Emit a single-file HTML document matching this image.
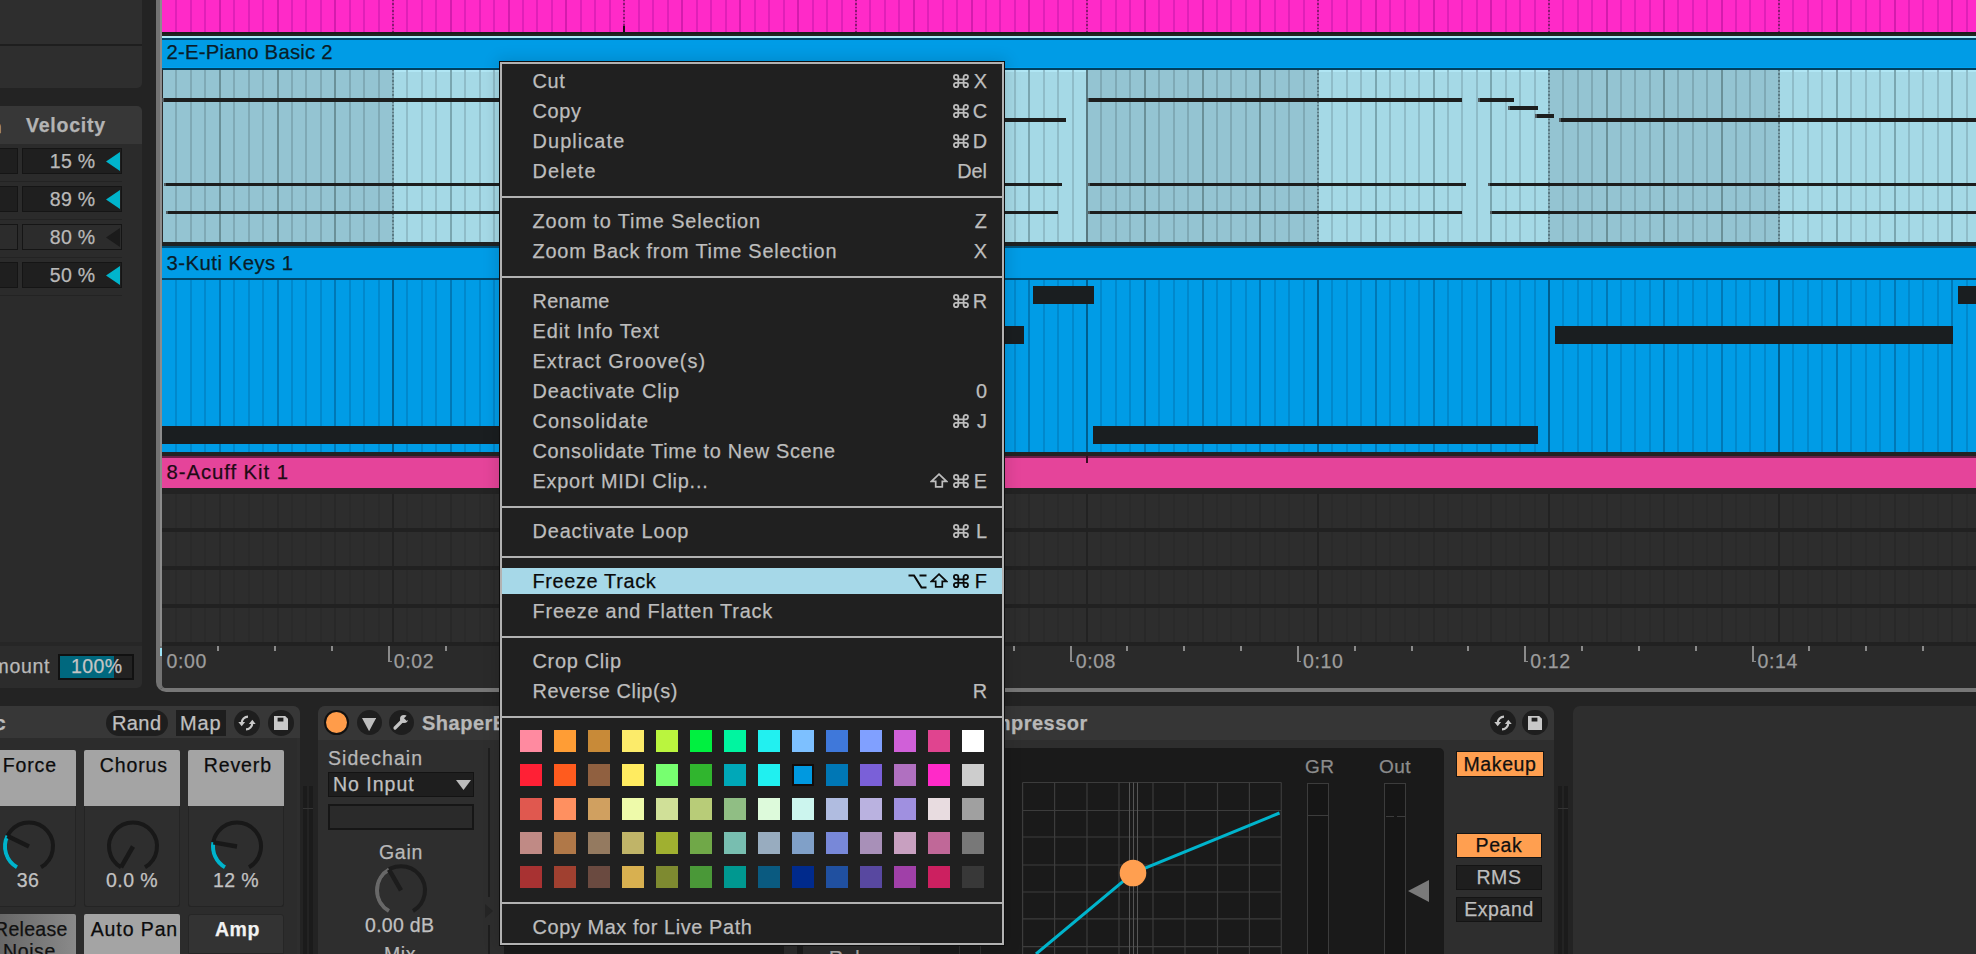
<!DOCTYPE html>
<html><head><meta charset="utf-8"><style>
html,body{margin:0;padding:0;width:1976px;height:954px;overflow:hidden;background:#232323;position:relative}
body>div,body>svg{position:absolute}
.t{white-space:pre;font-family:"Liberation Sans",sans-serif;-webkit-text-stroke:0.25px currentColor}
</style></head><body>
<div style="left:0px;top:0px;width:142px;height:88px;background:#2e2e2e;border-bottom-right-radius:5px"></div>
<div style="left:0px;top:44px;width:142px;height:1.5px;background:#1e1e1e;"></div>
<div style="left:0px;top:106px;width:142px;height:38px;background:#373737;border-top-right-radius:5px"></div>
<div style="left:0px;top:144px;width:142px;height:498px;background:#2b2b2b;"></div>
<div style="left:0px;top:642px;width:142px;height:4px;background:#262626;"></div>
<div style="left:0px;top:646px;width:142px;height:42px;background:#2c2c2c;border-bottom-right-radius:5px"></div>
<div class="t" style="left:-10px;top:116.72px;font-size:19px;line-height:19px;color:#b4b4b4;font-weight:bold;letter-spacing:0.4px;">n</div>
<div class="t" style="left:26px;top:116.29px;font-size:19.5px;line-height:19.5px;color:#b4b4b4;font-weight:bold;letter-spacing:0.78px;">Velocity</div>
<div style="left:-2px;top:148px;width:20px;height:26px;background:#1f1f1f;border:1px solid #151515;box-sizing:border-box"></div>
<div style="left:22px;top:148px;width:100px;height:26px;background:#1f1f1f;border:1.5px solid #151515;box-sizing:border-box"></div>
<div class="t" style="right:1880.5px;top:151.99px;font-size:19.5px;line-height:19.5px;color:#b9b9b9;font-weight:normal;letter-spacing:0.3px;text-align:right;">15 %</div>
<svg style="left:106px;top:151.5px" width="15" height="19"><polygon points="0,9.5 14,0 14,19" fill="#00b4cc"/></svg>
<div style="left:0px;top:180.5px;width:122px;height:1.5px;background:#232323;"></div>
<div style="left:-2px;top:186px;width:20px;height:26px;background:#1f1f1f;border:1px solid #151515;box-sizing:border-box"></div>
<div style="left:22px;top:186px;width:100px;height:26px;background:#1f1f1f;border:1.5px solid #151515;box-sizing:border-box"></div>
<div class="t" style="right:1880.5px;top:189.99px;font-size:19.5px;line-height:19.5px;color:#b9b9b9;font-weight:normal;letter-spacing:0.3px;text-align:right;">89 %</div>
<svg style="left:106px;top:189.5px" width="15" height="19"><polygon points="0,9.5 14,0 14,19" fill="#00b4cc"/></svg>
<div style="left:0px;top:218.5px;width:122px;height:1.5px;background:#232323;"></div>
<div style="left:-2px;top:224px;width:20px;height:26px;background:#2c2c2c;border:1px solid #151515;box-sizing:border-box"></div>
<div style="left:22px;top:224px;width:100px;height:26px;background:#2c2c2c;border:1.5px solid #151515;box-sizing:border-box"></div>
<div class="t" style="right:1880.5px;top:227.99px;font-size:19.5px;line-height:19.5px;color:#b9b9b9;font-weight:normal;letter-spacing:0.3px;text-align:right;">80 %</div>
<svg style="left:106px;top:227.5px" width="15" height="19"><polygon points="0,9.5 14,0 14,19" fill="#1b1b1b"/></svg>
<div style="left:0px;top:256.5px;width:122px;height:1.5px;background:#232323;"></div>
<div style="left:-2px;top:262px;width:20px;height:26px;background:#1f1f1f;border:1px solid #151515;box-sizing:border-box"></div>
<div style="left:22px;top:262px;width:100px;height:26px;background:#1f1f1f;border:1.5px solid #151515;box-sizing:border-box"></div>
<div class="t" style="right:1880.5px;top:265.99px;font-size:19.5px;line-height:19.5px;color:#b9b9b9;font-weight:normal;letter-spacing:0.3px;text-align:right;">50 %</div>
<svg style="left:106px;top:265.5px" width="15" height="19"><polygon points="0,9.5 14,0 14,19" fill="#00b4cc"/></svg>
<div style="left:0px;top:294.5px;width:122px;height:1.5px;background:#232323;"></div>
<div class="t" style="left:-7.5px;top:657.49px;font-size:19.5px;line-height:19.5px;color:#b9b9b9;font-weight:normal;letter-spacing:0.7px;">mount</div>
<div style="left:58px;top:654px;width:76px;height:26px;background:#222222;border:2px solid #111;box-sizing:border-box"></div>
<div style="left:60px;top:656px;width:54px;height:22px;background:#00687e;"></div>
<div class="t" style="left:71px;top:657.49px;font-size:19.5px;line-height:19.5px;color:#c4c4c4;font-weight:normal;letter-spacing:0.4px;">100%</div>
<div style="left:142px;top:0px;width:14px;height:706px;background:#232323;"></div>
<div style="left:156px;top:-20px;width:1840px;height:712px;border-left:6px solid #727272;border-bottom:4px solid #777;border-bottom-left-radius:10px;box-sizing:border-box;background:#2a2a2a"></div>
<div style="left:159.5px;top:0px;width:2.5px;height:646px;background:#8c8c8c;"></div>
<div style="left:162px;top:0px;width:1814px;height:32px;background:#ff2ac8;"></div>
<div style="left:175px;top:0px;width:2px;height:32px;background:#e020b8;"></div>
<div style="left:190px;top:0px;width:2px;height:32px;background:#e020b8;"></div>
<div style="left:204px;top:0px;width:2px;height:32px;background:#e020b8;"></div>
<div style="left:219px;top:0px;width:2px;height:32px;background:#d41cad;"></div>
<div style="left:233px;top:0px;width:2px;height:32px;background:#e020b8;"></div>
<div style="left:248px;top:0px;width:2px;height:32px;background:#e020b8;"></div>
<div style="left:262px;top:0px;width:2px;height:32px;background:#e020b8;"></div>
<div style="left:277px;top:0px;width:2px;height:32px;background:#d41cad;"></div>
<div style="left:291px;top:0px;width:2px;height:32px;background:#e020b8;"></div>
<div style="left:305px;top:0px;width:2px;height:32px;background:#e020b8;"></div>
<div style="left:320px;top:0px;width:2px;height:32px;background:#e020b8;"></div>
<div style="left:334px;top:0px;width:2px;height:32px;background:#d41cad;"></div>
<div style="left:349px;top:0px;width:2px;height:32px;background:#e020b8;"></div>
<div style="left:363px;top:0px;width:2px;height:32px;background:#e020b8;"></div>
<div style="left:378px;top:0px;width:2px;height:32px;background:#e020b8;"></div>
<div style="left:392px;top:0px;width:2px;height:32px;background:repeating-linear-gradient(180deg,#8a1870 0 1.5px,#e020b8 1.5px 3.5px)"></div>
<div style="left:406px;top:0px;width:2px;height:32px;background:#e020b8;"></div>
<div style="left:421px;top:0px;width:2px;height:32px;background:#e020b8;"></div>
<div style="left:435px;top:0px;width:2px;height:32px;background:#e020b8;"></div>
<div style="left:450px;top:0px;width:2px;height:32px;background:#d41cad;"></div>
<div style="left:464px;top:0px;width:2px;height:32px;background:#e020b8;"></div>
<div style="left:479px;top:0px;width:2px;height:32px;background:#e020b8;"></div>
<div style="left:493px;top:0px;width:2px;height:32px;background:#e020b8;"></div>
<div style="left:508px;top:0px;width:2px;height:32px;background:#d41cad;"></div>
<div style="left:522px;top:0px;width:2px;height:32px;background:#e020b8;"></div>
<div style="left:536px;top:0px;width:2px;height:32px;background:#e020b8;"></div>
<div style="left:551px;top:0px;width:2px;height:32px;background:#e020b8;"></div>
<div style="left:565px;top:0px;width:2px;height:32px;background:#d41cad;"></div>
<div style="left:580px;top:0px;width:2px;height:32px;background:#e020b8;"></div>
<div style="left:594px;top:0px;width:2px;height:32px;background:#e020b8;"></div>
<div style="left:609px;top:0px;width:2px;height:32px;background:#e020b8;"></div>
<div style="left:623px;top:0px;width:2px;height:32px;background:repeating-linear-gradient(180deg,#8a1870 0 1.5px,#e020b8 1.5px 3.5px)"></div>
<div style="left:638px;top:0px;width:2px;height:32px;background:#e020b8;"></div>
<div style="left:652px;top:0px;width:2px;height:32px;background:#e020b8;"></div>
<div style="left:667px;top:0px;width:2px;height:32px;background:#e020b8;"></div>
<div style="left:681px;top:0px;width:2px;height:32px;background:#d41cad;"></div>
<div style="left:696px;top:0px;width:2px;height:32px;background:#e020b8;"></div>
<div style="left:710px;top:0px;width:2px;height:32px;background:#e020b8;"></div>
<div style="left:725px;top:0px;width:2px;height:32px;background:#e020b8;"></div>
<div style="left:739px;top:0px;width:2px;height:32px;background:#d41cad;"></div>
<div style="left:754px;top:0px;width:2px;height:32px;background:#e020b8;"></div>
<div style="left:768px;top:0px;width:2px;height:32px;background:#e020b8;"></div>
<div style="left:783px;top:0px;width:2px;height:32px;background:#e020b8;"></div>
<div style="left:797px;top:0px;width:2px;height:32px;background:#d41cad;"></div>
<div style="left:812px;top:0px;width:2px;height:32px;background:#e020b8;"></div>
<div style="left:826px;top:0px;width:2px;height:32px;background:#e020b8;"></div>
<div style="left:841px;top:0px;width:2px;height:32px;background:#e020b8;"></div>
<div style="left:855px;top:0px;width:2px;height:32px;background:repeating-linear-gradient(180deg,#8a1870 0 1.5px,#e020b8 1.5px 3.5px)"></div>
<div style="left:869px;top:0px;width:2px;height:32px;background:#e020b8;"></div>
<div style="left:884px;top:0px;width:2px;height:32px;background:#e020b8;"></div>
<div style="left:898px;top:0px;width:2px;height:32px;background:#e020b8;"></div>
<div style="left:913px;top:0px;width:2px;height:32px;background:#d41cad;"></div>
<div style="left:927px;top:0px;width:2px;height:32px;background:#e020b8;"></div>
<div style="left:942px;top:0px;width:2px;height:32px;background:#e020b8;"></div>
<div style="left:956px;top:0px;width:2px;height:32px;background:#e020b8;"></div>
<div style="left:971px;top:0px;width:2px;height:32px;background:#d41cad;"></div>
<div style="left:985px;top:0px;width:2px;height:32px;background:#e020b8;"></div>
<div style="left:999px;top:0px;width:2px;height:32px;background:#e020b8;"></div>
<div style="left:1014px;top:0px;width:2px;height:32px;background:#e020b8;"></div>
<div style="left:1028px;top:0px;width:2px;height:32px;background:#d41cad;"></div>
<div style="left:1043px;top:0px;width:2px;height:32px;background:#e020b8;"></div>
<div style="left:1057px;top:0px;width:2px;height:32px;background:#e020b8;"></div>
<div style="left:1072px;top:0px;width:2px;height:32px;background:#e020b8;"></div>
<div style="left:1086px;top:0px;width:2px;height:32px;background:repeating-linear-gradient(180deg,#8a1870 0 1.5px,#e020b8 1.5px 3.5px)"></div>
<div style="left:1100px;top:0px;width:2px;height:32px;background:#e020b8;"></div>
<div style="left:1115px;top:0px;width:2px;height:32px;background:#e020b8;"></div>
<div style="left:1129px;top:0px;width:2px;height:32px;background:#e020b8;"></div>
<div style="left:1144px;top:0px;width:2px;height:32px;background:#d41cad;"></div>
<div style="left:1158px;top:0px;width:2px;height:32px;background:#e020b8;"></div>
<div style="left:1173px;top:0px;width:2px;height:32px;background:#e020b8;"></div>
<div style="left:1187px;top:0px;width:2px;height:32px;background:#e020b8;"></div>
<div style="left:1202px;top:0px;width:2px;height:32px;background:#d41cad;"></div>
<div style="left:1216px;top:0px;width:2px;height:32px;background:#e020b8;"></div>
<div style="left:1230px;top:0px;width:2px;height:32px;background:#e020b8;"></div>
<div style="left:1245px;top:0px;width:2px;height:32px;background:#e020b8;"></div>
<div style="left:1259px;top:0px;width:2px;height:32px;background:#d41cad;"></div>
<div style="left:1274px;top:0px;width:2px;height:32px;background:#e020b8;"></div>
<div style="left:1288px;top:0px;width:2px;height:32px;background:#e020b8;"></div>
<div style="left:1303px;top:0px;width:2px;height:32px;background:#e020b8;"></div>
<div style="left:1317px;top:0px;width:2px;height:32px;background:repeating-linear-gradient(180deg,#8a1870 0 1.5px,#e020b8 1.5px 3.5px)"></div>
<div style="left:1331px;top:0px;width:2px;height:32px;background:#e020b8;"></div>
<div style="left:1346px;top:0px;width:2px;height:32px;background:#e020b8;"></div>
<div style="left:1360px;top:0px;width:2px;height:32px;background:#e020b8;"></div>
<div style="left:1375px;top:0px;width:2px;height:32px;background:#d41cad;"></div>
<div style="left:1389px;top:0px;width:2px;height:32px;background:#e020b8;"></div>
<div style="left:1404px;top:0px;width:2px;height:32px;background:#e020b8;"></div>
<div style="left:1418px;top:0px;width:2px;height:32px;background:#e020b8;"></div>
<div style="left:1433px;top:0px;width:2px;height:32px;background:#d41cad;"></div>
<div style="left:1447px;top:0px;width:2px;height:32px;background:#e020b8;"></div>
<div style="left:1461px;top:0px;width:2px;height:32px;background:#e020b8;"></div>
<div style="left:1476px;top:0px;width:2px;height:32px;background:#e020b8;"></div>
<div style="left:1490px;top:0px;width:2px;height:32px;background:#d41cad;"></div>
<div style="left:1505px;top:0px;width:2px;height:32px;background:#e020b8;"></div>
<div style="left:1519px;top:0px;width:2px;height:32px;background:#e020b8;"></div>
<div style="left:1534px;top:0px;width:2px;height:32px;background:#e020b8;"></div>
<div style="left:1548px;top:0px;width:2px;height:32px;background:repeating-linear-gradient(180deg,#8a1870 0 1.5px,#e020b8 1.5px 3.5px)"></div>
<div style="left:1562px;top:0px;width:2px;height:32px;background:#e020b8;"></div>
<div style="left:1577px;top:0px;width:2px;height:32px;background:#e020b8;"></div>
<div style="left:1591px;top:0px;width:2px;height:32px;background:#e020b8;"></div>
<div style="left:1606px;top:0px;width:2px;height:32px;background:#d41cad;"></div>
<div style="left:1620px;top:0px;width:2px;height:32px;background:#e020b8;"></div>
<div style="left:1634px;top:0px;width:2px;height:32px;background:#e020b8;"></div>
<div style="left:1649px;top:0px;width:2px;height:32px;background:#e020b8;"></div>
<div style="left:1663px;top:0px;width:2px;height:32px;background:#d41cad;"></div>
<div style="left:1677px;top:0px;width:2px;height:32px;background:#e020b8;"></div>
<div style="left:1692px;top:0px;width:2px;height:32px;background:#e020b8;"></div>
<div style="left:1706px;top:0px;width:2px;height:32px;background:#e020b8;"></div>
<div style="left:1721px;top:0px;width:2px;height:32px;background:#d41cad;"></div>
<div style="left:1735px;top:0px;width:2px;height:32px;background:#e020b8;"></div>
<div style="left:1749px;top:0px;width:2px;height:32px;background:#e020b8;"></div>
<div style="left:1764px;top:0px;width:2px;height:32px;background:#e020b8;"></div>
<div style="left:1778px;top:0px;width:2px;height:32px;background:repeating-linear-gradient(180deg,#8a1870 0 1.5px,#e020b8 1.5px 3.5px)"></div>
<div style="left:1792px;top:0px;width:2px;height:32px;background:#e020b8;"></div>
<div style="left:1807px;top:0px;width:2px;height:32px;background:#e020b8;"></div>
<div style="left:1821px;top:0px;width:2px;height:32px;background:#e020b8;"></div>
<div style="left:1836px;top:0px;width:2px;height:32px;background:#d41cad;"></div>
<div style="left:1850px;top:0px;width:2px;height:32px;background:#e020b8;"></div>
<div style="left:1865px;top:0px;width:2px;height:32px;background:#e020b8;"></div>
<div style="left:1879px;top:0px;width:2px;height:32px;background:#e020b8;"></div>
<div style="left:1894px;top:0px;width:2px;height:32px;background:#d41cad;"></div>
<div style="left:1908px;top:0px;width:2px;height:32px;background:#e020b8;"></div>
<div style="left:1922px;top:0px;width:2px;height:32px;background:#e020b8;"></div>
<div style="left:1937px;top:0px;width:2px;height:32px;background:#e020b8;"></div>
<div style="left:1951px;top:0px;width:2px;height:32px;background:#d41cad;"></div>
<div style="left:1966px;top:0px;width:2px;height:32px;background:#e020b8;"></div>
<div style="left:623px;top:26px;width:2px;height:6px;background:#1a0a14;"></div>
<div style="left:162px;top:32px;width:1814px;height:1.5px;background:#1a1e1a;"></div>
<div style="left:162px;top:33.5px;width:1814px;height:2.3px;background:#222222;"></div>
<div style="left:162px;top:35.8px;width:1814px;height:2.2px;background:#aeeaf8;"></div>
<div style="left:162px;top:38px;width:1814px;height:2px;background:#004466;"></div>
<div style="left:162px;top:40px;width:1814px;height:27px;background:#009ce6;"></div>
<div style="left:162px;top:67px;width:1814px;height:1px;background:#00a3f0;"></div>
<div style="left:162px;top:68px;width:1814px;height:2px;background:#00405f;"></div>
<div class="t" style="left:166.5px;top:42.02px;font-size:20.3px;line-height:20.3px;color:#0a1c28;font-weight:normal;letter-spacing:0.23px;">2-E-Piano Basic 2</div>
<div style="left:163px;top:70px;width:231px;height:172px;background:#94c4d2;"></div>
<div style="left:394px;top:70px;width:231px;height:172px;background:#a5d9e6;"></div>
<div style="left:394px;top:70px;width:231px;height:1.5px;background:#b0e6f4;"></div>
<div style="left:625px;top:70px;width:232px;height:172px;background:#94c4d2;"></div>
<div style="left:857px;top:70px;width:231px;height:172px;background:#a5d9e6;"></div>
<div style="left:857px;top:70px;width:231px;height:1.5px;background:#b0e6f4;"></div>
<div style="left:1088px;top:70px;width:231px;height:172px;background:#94c4d2;"></div>
<div style="left:1319px;top:70px;width:231px;height:172px;background:#a5d9e6;"></div>
<div style="left:1319px;top:70px;width:231px;height:1.5px;background:#b0e6f4;"></div>
<div style="left:1550px;top:70px;width:230px;height:172px;background:#94c4d2;"></div>
<div style="left:1780px;top:70px;width:231px;height:172px;background:#a5d9e6;"></div>
<div style="left:1780px;top:70px;width:231px;height:1.5px;background:#b0e6f4;"></div>
<div style="left:175px;top:70px;width:2px;height:172px;background:#7fa9b5;"></div>
<div style="left:190px;top:70px;width:2px;height:172px;background:#7fa9b5;"></div>
<div style="left:204px;top:70px;width:2px;height:172px;background:#7fa9b5;"></div>
<div style="left:219px;top:70px;width:2px;height:172px;background:#6a9098;"></div>
<div style="left:233px;top:70px;width:2px;height:172px;background:#7fa9b5;"></div>
<div style="left:248px;top:70px;width:2px;height:172px;background:#7fa9b5;"></div>
<div style="left:262px;top:70px;width:2px;height:172px;background:#7fa9b5;"></div>
<div style="left:277px;top:70px;width:2px;height:172px;background:#6a9098;"></div>
<div style="left:291px;top:70px;width:2px;height:172px;background:#7fa9b5;"></div>
<div style="left:305px;top:70px;width:2px;height:172px;background:#7fa9b5;"></div>
<div style="left:320px;top:70px;width:2px;height:172px;background:#7fa9b5;"></div>
<div style="left:334px;top:70px;width:2px;height:172px;background:#6a9098;"></div>
<div style="left:349px;top:70px;width:2px;height:172px;background:#7fa9b5;"></div>
<div style="left:363px;top:70px;width:2px;height:172px;background:#7fa9b5;"></div>
<div style="left:378px;top:70px;width:2px;height:172px;background:#7fa9b5;"></div>
<div style="left:392px;top:70px;width:2px;height:172px;background:repeating-linear-gradient(180deg,#5a7a84 0 1.5px,#7ea4ae 1.5px 3.5px)"></div>
<div style="left:406px;top:70px;width:2px;height:172px;background:#8fbcc8;"></div>
<div style="left:421px;top:70px;width:2px;height:172px;background:#8fbcc8;"></div>
<div style="left:435px;top:70px;width:2px;height:172px;background:#8fbcc8;"></div>
<div style="left:450px;top:70px;width:2px;height:172px;background:#7aa6b0;"></div>
<div style="left:464px;top:70px;width:2px;height:172px;background:#8fbcc8;"></div>
<div style="left:479px;top:70px;width:2px;height:172px;background:#8fbcc8;"></div>
<div style="left:493px;top:70px;width:2px;height:172px;background:#8fbcc8;"></div>
<div style="left:508px;top:70px;width:2px;height:172px;background:#7aa6b0;"></div>
<div style="left:522px;top:70px;width:2px;height:172px;background:#8fbcc8;"></div>
<div style="left:536px;top:70px;width:2px;height:172px;background:#8fbcc8;"></div>
<div style="left:551px;top:70px;width:2px;height:172px;background:#8fbcc8;"></div>
<div style="left:565px;top:70px;width:2px;height:172px;background:#7aa6b0;"></div>
<div style="left:580px;top:70px;width:2px;height:172px;background:#8fbcc8;"></div>
<div style="left:594px;top:70px;width:2px;height:172px;background:#8fbcc8;"></div>
<div style="left:609px;top:70px;width:2px;height:172px;background:#8fbcc8;"></div>
<div style="left:623px;top:70px;width:2px;height:172px;background:repeating-linear-gradient(180deg,#5a7a84 0 1.5px,#7ea4ae 1.5px 3.5px)"></div>
<div style="left:638px;top:70px;width:2px;height:172px;background:#7fa9b5;"></div>
<div style="left:652px;top:70px;width:2px;height:172px;background:#7fa9b5;"></div>
<div style="left:667px;top:70px;width:2px;height:172px;background:#7fa9b5;"></div>
<div style="left:681px;top:70px;width:2px;height:172px;background:#6a9098;"></div>
<div style="left:696px;top:70px;width:2px;height:172px;background:#7fa9b5;"></div>
<div style="left:710px;top:70px;width:2px;height:172px;background:#7fa9b5;"></div>
<div style="left:725px;top:70px;width:2px;height:172px;background:#7fa9b5;"></div>
<div style="left:739px;top:70px;width:2px;height:172px;background:#6a9098;"></div>
<div style="left:754px;top:70px;width:2px;height:172px;background:#7fa9b5;"></div>
<div style="left:768px;top:70px;width:2px;height:172px;background:#7fa9b5;"></div>
<div style="left:783px;top:70px;width:2px;height:172px;background:#7fa9b5;"></div>
<div style="left:797px;top:70px;width:2px;height:172px;background:#6a9098;"></div>
<div style="left:812px;top:70px;width:2px;height:172px;background:#7fa9b5;"></div>
<div style="left:826px;top:70px;width:2px;height:172px;background:#7fa9b5;"></div>
<div style="left:841px;top:70px;width:2px;height:172px;background:#7fa9b5;"></div>
<div style="left:855px;top:70px;width:2px;height:172px;background:repeating-linear-gradient(180deg,#5a7a84 0 1.5px,#7ea4ae 1.5px 3.5px)"></div>
<div style="left:869px;top:70px;width:2px;height:172px;background:#8fbcc8;"></div>
<div style="left:884px;top:70px;width:2px;height:172px;background:#8fbcc8;"></div>
<div style="left:898px;top:70px;width:2px;height:172px;background:#8fbcc8;"></div>
<div style="left:913px;top:70px;width:2px;height:172px;background:#7aa6b0;"></div>
<div style="left:927px;top:70px;width:2px;height:172px;background:#8fbcc8;"></div>
<div style="left:942px;top:70px;width:2px;height:172px;background:#8fbcc8;"></div>
<div style="left:956px;top:70px;width:2px;height:172px;background:#8fbcc8;"></div>
<div style="left:971px;top:70px;width:2px;height:172px;background:#7aa6b0;"></div>
<div style="left:985px;top:70px;width:2px;height:172px;background:#8fbcc8;"></div>
<div style="left:999px;top:70px;width:2px;height:172px;background:#8fbcc8;"></div>
<div style="left:1014px;top:70px;width:2px;height:172px;background:#8fbcc8;"></div>
<div style="left:1028px;top:70px;width:2px;height:172px;background:#7aa6b0;"></div>
<div style="left:1043px;top:70px;width:2px;height:172px;background:#8fbcc8;"></div>
<div style="left:1057px;top:70px;width:2px;height:172px;background:#8fbcc8;"></div>
<div style="left:1072px;top:70px;width:2px;height:172px;background:#8fbcc8;"></div>
<div style="left:1086px;top:70px;width:2px;height:172px;background:repeating-linear-gradient(180deg,#5a7a84 0 1.5px,#7ea4ae 1.5px 3.5px)"></div>
<div style="left:1100px;top:70px;width:2px;height:172px;background:#7fa9b5;"></div>
<div style="left:1115px;top:70px;width:2px;height:172px;background:#7fa9b5;"></div>
<div style="left:1129px;top:70px;width:2px;height:172px;background:#7fa9b5;"></div>
<div style="left:1144px;top:70px;width:2px;height:172px;background:#6a9098;"></div>
<div style="left:1158px;top:70px;width:2px;height:172px;background:#7fa9b5;"></div>
<div style="left:1173px;top:70px;width:2px;height:172px;background:#7fa9b5;"></div>
<div style="left:1187px;top:70px;width:2px;height:172px;background:#7fa9b5;"></div>
<div style="left:1202px;top:70px;width:2px;height:172px;background:#6a9098;"></div>
<div style="left:1216px;top:70px;width:2px;height:172px;background:#7fa9b5;"></div>
<div style="left:1230px;top:70px;width:2px;height:172px;background:#7fa9b5;"></div>
<div style="left:1245px;top:70px;width:2px;height:172px;background:#7fa9b5;"></div>
<div style="left:1259px;top:70px;width:2px;height:172px;background:#6a9098;"></div>
<div style="left:1274px;top:70px;width:2px;height:172px;background:#7fa9b5;"></div>
<div style="left:1288px;top:70px;width:2px;height:172px;background:#7fa9b5;"></div>
<div style="left:1303px;top:70px;width:2px;height:172px;background:#7fa9b5;"></div>
<div style="left:1317px;top:70px;width:2px;height:172px;background:repeating-linear-gradient(180deg,#5a7a84 0 1.5px,#7ea4ae 1.5px 3.5px)"></div>
<div style="left:1331px;top:70px;width:2px;height:172px;background:#8fbcc8;"></div>
<div style="left:1346px;top:70px;width:2px;height:172px;background:#8fbcc8;"></div>
<div style="left:1360px;top:70px;width:2px;height:172px;background:#8fbcc8;"></div>
<div style="left:1375px;top:70px;width:2px;height:172px;background:#7aa6b0;"></div>
<div style="left:1389px;top:70px;width:2px;height:172px;background:#8fbcc8;"></div>
<div style="left:1404px;top:70px;width:2px;height:172px;background:#8fbcc8;"></div>
<div style="left:1418px;top:70px;width:2px;height:172px;background:#8fbcc8;"></div>
<div style="left:1433px;top:70px;width:2px;height:172px;background:#7aa6b0;"></div>
<div style="left:1447px;top:70px;width:2px;height:172px;background:#8fbcc8;"></div>
<div style="left:1461px;top:70px;width:2px;height:172px;background:#8fbcc8;"></div>
<div style="left:1476px;top:70px;width:2px;height:172px;background:#8fbcc8;"></div>
<div style="left:1490px;top:70px;width:2px;height:172px;background:#7aa6b0;"></div>
<div style="left:1505px;top:70px;width:2px;height:172px;background:#8fbcc8;"></div>
<div style="left:1519px;top:70px;width:2px;height:172px;background:#8fbcc8;"></div>
<div style="left:1534px;top:70px;width:2px;height:172px;background:#8fbcc8;"></div>
<div style="left:1548px;top:70px;width:2px;height:172px;background:repeating-linear-gradient(180deg,#5a7a84 0 1.5px,#7ea4ae 1.5px 3.5px)"></div>
<div style="left:1562px;top:70px;width:2px;height:172px;background:#7fa9b5;"></div>
<div style="left:1577px;top:70px;width:2px;height:172px;background:#7fa9b5;"></div>
<div style="left:1591px;top:70px;width:2px;height:172px;background:#7fa9b5;"></div>
<div style="left:1606px;top:70px;width:2px;height:172px;background:#6a9098;"></div>
<div style="left:1620px;top:70px;width:2px;height:172px;background:#7fa9b5;"></div>
<div style="left:1634px;top:70px;width:2px;height:172px;background:#7fa9b5;"></div>
<div style="left:1649px;top:70px;width:2px;height:172px;background:#7fa9b5;"></div>
<div style="left:1663px;top:70px;width:2px;height:172px;background:#6a9098;"></div>
<div style="left:1677px;top:70px;width:2px;height:172px;background:#7fa9b5;"></div>
<div style="left:1692px;top:70px;width:2px;height:172px;background:#7fa9b5;"></div>
<div style="left:1706px;top:70px;width:2px;height:172px;background:#7fa9b5;"></div>
<div style="left:1721px;top:70px;width:2px;height:172px;background:#6a9098;"></div>
<div style="left:1735px;top:70px;width:2px;height:172px;background:#7fa9b5;"></div>
<div style="left:1749px;top:70px;width:2px;height:172px;background:#7fa9b5;"></div>
<div style="left:1764px;top:70px;width:2px;height:172px;background:#7fa9b5;"></div>
<div style="left:1778px;top:70px;width:2px;height:172px;background:repeating-linear-gradient(180deg,#5a7a84 0 1.5px,#7ea4ae 1.5px 3.5px)"></div>
<div style="left:1792px;top:70px;width:2px;height:172px;background:#8fbcc8;"></div>
<div style="left:1807px;top:70px;width:2px;height:172px;background:#8fbcc8;"></div>
<div style="left:1821px;top:70px;width:2px;height:172px;background:#8fbcc8;"></div>
<div style="left:1836px;top:70px;width:2px;height:172px;background:#7aa6b0;"></div>
<div style="left:1850px;top:70px;width:2px;height:172px;background:#8fbcc8;"></div>
<div style="left:1865px;top:70px;width:2px;height:172px;background:#8fbcc8;"></div>
<div style="left:1879px;top:70px;width:2px;height:172px;background:#8fbcc8;"></div>
<div style="left:1894px;top:70px;width:2px;height:172px;background:#7aa6b0;"></div>
<div style="left:1908px;top:70px;width:2px;height:172px;background:#8fbcc8;"></div>
<div style="left:1922px;top:70px;width:2px;height:172px;background:#8fbcc8;"></div>
<div style="left:1937px;top:70px;width:2px;height:172px;background:#8fbcc8;"></div>
<div style="left:1951px;top:70px;width:2px;height:172px;background:#7aa6b0;"></div>
<div style="left:1966px;top:70px;width:2px;height:172px;background:#8fbcc8;"></div>
<div style="left:1086px;top:70px;width:2px;height:172px;background:#587880;"></div>
<div style="left:162px;top:98.2px;width:340px;height:3.6px;background:#1c1e1e;"></div>
<div style="left:162px;top:98.2px;width:2px;height:3.6px;background:#505a5e;"></div>
<div style="left:1087px;top:98.2px;width:375px;height:3.6px;background:#1c1e1e;"></div>
<div style="left:1087px;top:98.2px;width:2px;height:3.6px;background:#505a5e;"></div>
<div style="left:1478px;top:98.2px;width:36px;height:3.6px;background:#1c1e1e;"></div>
<div style="left:1478px;top:98.2px;width:2px;height:3.6px;background:#505a5e;"></div>
<div style="left:1508px;top:106px;width:30px;height:3.6px;background:#1c1e1e;"></div>
<div style="left:1508px;top:106px;width:2px;height:3.6px;background:#505a5e;"></div>
<div style="left:1535px;top:114px;width:19px;height:3.6px;background:#1c1e1e;"></div>
<div style="left:1535px;top:114px;width:2px;height:3.6px;background:#505a5e;"></div>
<div style="left:1003px;top:118.2px;width:63px;height:3.6px;background:#1c1e1e;"></div>
<div style="left:1003px;top:118.2px;width:2px;height:3.6px;background:#505a5e;"></div>
<div style="left:1559px;top:118.2px;width:417px;height:3.6px;background:#1c1e1e;"></div>
<div style="left:1559px;top:118.2px;width:2px;height:3.6px;background:#505a5e;"></div>
<div style="left:164px;top:182.5px;width:340px;height:3.6px;background:#1c1e1e;"></div>
<div style="left:164px;top:182.5px;width:2px;height:3.6px;background:#505a5e;"></div>
<div style="left:1003px;top:182.5px;width:59px;height:3.6px;background:#1c1e1e;"></div>
<div style="left:1003px;top:182.5px;width:2px;height:3.6px;background:#505a5e;"></div>
<div style="left:1088px;top:182.5px;width:378px;height:3.6px;background:#1c1e1e;"></div>
<div style="left:1088px;top:182.5px;width:2px;height:3.6px;background:#505a5e;"></div>
<div style="left:1488px;top:182.5px;width:488px;height:3.6px;background:#1c1e1e;"></div>
<div style="left:1488px;top:182.5px;width:2px;height:3.6px;background:#505a5e;"></div>
<div style="left:166px;top:210.5px;width:340px;height:3.6px;background:#1c1e1e;"></div>
<div style="left:166px;top:210.5px;width:2px;height:3.6px;background:#505a5e;"></div>
<div style="left:1003px;top:210.5px;width:55px;height:3.6px;background:#1c1e1e;"></div>
<div style="left:1003px;top:210.5px;width:2px;height:3.6px;background:#505a5e;"></div>
<div style="left:1088px;top:210.5px;width:374px;height:3.6px;background:#1c1e1e;"></div>
<div style="left:1088px;top:210.5px;width:2px;height:3.6px;background:#505a5e;"></div>
<div style="left:1490px;top:210.5px;width:486px;height:3.6px;background:#1c1e1e;"></div>
<div style="left:1490px;top:210.5px;width:2px;height:3.6px;background:#505a5e;"></div>
<div style="left:162px;top:242px;width:1814px;height:4px;background:#202222;"></div>
<div style="left:162px;top:246px;width:1814px;height:2px;background:#00527a;"></div>
<div style="left:162px;top:248px;width:1814px;height:29.6px;background:#009ce6;"></div>
<div style="left:162px;top:277.6px;width:1814px;height:2.2px;background:#00466a;"></div>
<div class="t" style="left:166.5px;top:252.82px;font-size:20.3px;line-height:20.3px;color:#0a1c28;font-weight:normal;letter-spacing:0.5px;">3-Kuti Keys 1</div>
<div style="left:162px;top:279.8px;width:1814px;height:172.2px;background:#009ce6;"></div>
<div style="left:175px;top:279.8px;width:2px;height:172.2px;background:#0088cc;"></div>
<div style="left:190px;top:279.8px;width:2px;height:172.2px;background:#0088cc;"></div>
<div style="left:204px;top:279.8px;width:2px;height:172.2px;background:#0088cc;"></div>
<div style="left:219px;top:279.8px;width:2px;height:172.2px;background:#0078b6;"></div>
<div style="left:233px;top:279.8px;width:2px;height:172.2px;background:#0088cc;"></div>
<div style="left:248px;top:279.8px;width:2px;height:172.2px;background:#0088cc;"></div>
<div style="left:262px;top:279.8px;width:2px;height:172.2px;background:#0088cc;"></div>
<div style="left:277px;top:279.8px;width:2px;height:172.2px;background:#0078b6;"></div>
<div style="left:291px;top:279.8px;width:2px;height:172.2px;background:#0088cc;"></div>
<div style="left:305px;top:279.8px;width:2px;height:172.2px;background:#0088cc;"></div>
<div style="left:320px;top:279.8px;width:2px;height:172.2px;background:#0088cc;"></div>
<div style="left:334px;top:279.8px;width:2px;height:172.2px;background:#0078b6;"></div>
<div style="left:349px;top:279.8px;width:2px;height:172.2px;background:#0088cc;"></div>
<div style="left:363px;top:279.8px;width:2px;height:172.2px;background:#0088cc;"></div>
<div style="left:378px;top:279.8px;width:2px;height:172.2px;background:#0088cc;"></div>
<div style="left:392px;top:279.8px;width:2px;height:172.2px;background:#005e8e;"></div>
<div style="left:406px;top:279.8px;width:2px;height:172.2px;background:#0088cc;"></div>
<div style="left:421px;top:279.8px;width:2px;height:172.2px;background:#0088cc;"></div>
<div style="left:435px;top:279.8px;width:2px;height:172.2px;background:#0088cc;"></div>
<div style="left:450px;top:279.8px;width:2px;height:172.2px;background:#0078b6;"></div>
<div style="left:464px;top:279.8px;width:2px;height:172.2px;background:#0088cc;"></div>
<div style="left:479px;top:279.8px;width:2px;height:172.2px;background:#0088cc;"></div>
<div style="left:493px;top:279.8px;width:2px;height:172.2px;background:#0088cc;"></div>
<div style="left:508px;top:279.8px;width:2px;height:172.2px;background:#0078b6;"></div>
<div style="left:522px;top:279.8px;width:2px;height:172.2px;background:#0088cc;"></div>
<div style="left:536px;top:279.8px;width:2px;height:172.2px;background:#0088cc;"></div>
<div style="left:551px;top:279.8px;width:2px;height:172.2px;background:#0088cc;"></div>
<div style="left:565px;top:279.8px;width:2px;height:172.2px;background:#0078b6;"></div>
<div style="left:580px;top:279.8px;width:2px;height:172.2px;background:#0088cc;"></div>
<div style="left:594px;top:279.8px;width:2px;height:172.2px;background:#0088cc;"></div>
<div style="left:609px;top:279.8px;width:2px;height:172.2px;background:#0088cc;"></div>
<div style="left:623px;top:279.8px;width:2px;height:172.2px;background:#005e8e;"></div>
<div style="left:638px;top:279.8px;width:2px;height:172.2px;background:#0088cc;"></div>
<div style="left:652px;top:279.8px;width:2px;height:172.2px;background:#0088cc;"></div>
<div style="left:667px;top:279.8px;width:2px;height:172.2px;background:#0088cc;"></div>
<div style="left:681px;top:279.8px;width:2px;height:172.2px;background:#0078b6;"></div>
<div style="left:696px;top:279.8px;width:2px;height:172.2px;background:#0088cc;"></div>
<div style="left:710px;top:279.8px;width:2px;height:172.2px;background:#0088cc;"></div>
<div style="left:725px;top:279.8px;width:2px;height:172.2px;background:#0088cc;"></div>
<div style="left:739px;top:279.8px;width:2px;height:172.2px;background:#0078b6;"></div>
<div style="left:754px;top:279.8px;width:2px;height:172.2px;background:#0088cc;"></div>
<div style="left:768px;top:279.8px;width:2px;height:172.2px;background:#0088cc;"></div>
<div style="left:783px;top:279.8px;width:2px;height:172.2px;background:#0088cc;"></div>
<div style="left:797px;top:279.8px;width:2px;height:172.2px;background:#0078b6;"></div>
<div style="left:812px;top:279.8px;width:2px;height:172.2px;background:#0088cc;"></div>
<div style="left:826px;top:279.8px;width:2px;height:172.2px;background:#0088cc;"></div>
<div style="left:841px;top:279.8px;width:2px;height:172.2px;background:#0088cc;"></div>
<div style="left:855px;top:279.8px;width:2px;height:172.2px;background:#005e8e;"></div>
<div style="left:869px;top:279.8px;width:2px;height:172.2px;background:#0088cc;"></div>
<div style="left:884px;top:279.8px;width:2px;height:172.2px;background:#0088cc;"></div>
<div style="left:898px;top:279.8px;width:2px;height:172.2px;background:#0088cc;"></div>
<div style="left:913px;top:279.8px;width:2px;height:172.2px;background:#0078b6;"></div>
<div style="left:927px;top:279.8px;width:2px;height:172.2px;background:#0088cc;"></div>
<div style="left:942px;top:279.8px;width:2px;height:172.2px;background:#0088cc;"></div>
<div style="left:956px;top:279.8px;width:2px;height:172.2px;background:#0088cc;"></div>
<div style="left:971px;top:279.8px;width:2px;height:172.2px;background:#0078b6;"></div>
<div style="left:985px;top:279.8px;width:2px;height:172.2px;background:#0088cc;"></div>
<div style="left:999px;top:279.8px;width:2px;height:172.2px;background:#0088cc;"></div>
<div style="left:1014px;top:279.8px;width:2px;height:172.2px;background:#0088cc;"></div>
<div style="left:1028px;top:279.8px;width:2px;height:172.2px;background:#0078b6;"></div>
<div style="left:1043px;top:279.8px;width:2px;height:172.2px;background:#0088cc;"></div>
<div style="left:1057px;top:279.8px;width:2px;height:172.2px;background:#0088cc;"></div>
<div style="left:1072px;top:279.8px;width:2px;height:172.2px;background:#0088cc;"></div>
<div style="left:1086px;top:279.8px;width:2px;height:172.2px;background:#005e8e;"></div>
<div style="left:1100px;top:279.8px;width:2px;height:172.2px;background:#0088cc;"></div>
<div style="left:1115px;top:279.8px;width:2px;height:172.2px;background:#0088cc;"></div>
<div style="left:1129px;top:279.8px;width:2px;height:172.2px;background:#0088cc;"></div>
<div style="left:1144px;top:279.8px;width:2px;height:172.2px;background:#0078b6;"></div>
<div style="left:1158px;top:279.8px;width:2px;height:172.2px;background:#0088cc;"></div>
<div style="left:1173px;top:279.8px;width:2px;height:172.2px;background:#0088cc;"></div>
<div style="left:1187px;top:279.8px;width:2px;height:172.2px;background:#0088cc;"></div>
<div style="left:1202px;top:279.8px;width:2px;height:172.2px;background:#0078b6;"></div>
<div style="left:1216px;top:279.8px;width:2px;height:172.2px;background:#0088cc;"></div>
<div style="left:1230px;top:279.8px;width:2px;height:172.2px;background:#0088cc;"></div>
<div style="left:1245px;top:279.8px;width:2px;height:172.2px;background:#0088cc;"></div>
<div style="left:1259px;top:279.8px;width:2px;height:172.2px;background:#0078b6;"></div>
<div style="left:1274px;top:279.8px;width:2px;height:172.2px;background:#0088cc;"></div>
<div style="left:1288px;top:279.8px;width:2px;height:172.2px;background:#0088cc;"></div>
<div style="left:1303px;top:279.8px;width:2px;height:172.2px;background:#0088cc;"></div>
<div style="left:1317px;top:279.8px;width:2px;height:172.2px;background:#005e8e;"></div>
<div style="left:1331px;top:279.8px;width:2px;height:172.2px;background:#0088cc;"></div>
<div style="left:1346px;top:279.8px;width:2px;height:172.2px;background:#0088cc;"></div>
<div style="left:1360px;top:279.8px;width:2px;height:172.2px;background:#0088cc;"></div>
<div style="left:1375px;top:279.8px;width:2px;height:172.2px;background:#0078b6;"></div>
<div style="left:1389px;top:279.8px;width:2px;height:172.2px;background:#0088cc;"></div>
<div style="left:1404px;top:279.8px;width:2px;height:172.2px;background:#0088cc;"></div>
<div style="left:1418px;top:279.8px;width:2px;height:172.2px;background:#0088cc;"></div>
<div style="left:1433px;top:279.8px;width:2px;height:172.2px;background:#0078b6;"></div>
<div style="left:1447px;top:279.8px;width:2px;height:172.2px;background:#0088cc;"></div>
<div style="left:1461px;top:279.8px;width:2px;height:172.2px;background:#0088cc;"></div>
<div style="left:1476px;top:279.8px;width:2px;height:172.2px;background:#0088cc;"></div>
<div style="left:1490px;top:279.8px;width:2px;height:172.2px;background:#0078b6;"></div>
<div style="left:1505px;top:279.8px;width:2px;height:172.2px;background:#0088cc;"></div>
<div style="left:1519px;top:279.8px;width:2px;height:172.2px;background:#0088cc;"></div>
<div style="left:1534px;top:279.8px;width:2px;height:172.2px;background:#0088cc;"></div>
<div style="left:1548px;top:279.8px;width:2px;height:172.2px;background:#005e8e;"></div>
<div style="left:1562px;top:279.8px;width:2px;height:172.2px;background:#0088cc;"></div>
<div style="left:1577px;top:279.8px;width:2px;height:172.2px;background:#0088cc;"></div>
<div style="left:1591px;top:279.8px;width:2px;height:172.2px;background:#0088cc;"></div>
<div style="left:1606px;top:279.8px;width:2px;height:172.2px;background:#0078b6;"></div>
<div style="left:1620px;top:279.8px;width:2px;height:172.2px;background:#0088cc;"></div>
<div style="left:1634px;top:279.8px;width:2px;height:172.2px;background:#0088cc;"></div>
<div style="left:1649px;top:279.8px;width:2px;height:172.2px;background:#0088cc;"></div>
<div style="left:1663px;top:279.8px;width:2px;height:172.2px;background:#0078b6;"></div>
<div style="left:1677px;top:279.8px;width:2px;height:172.2px;background:#0088cc;"></div>
<div style="left:1692px;top:279.8px;width:2px;height:172.2px;background:#0088cc;"></div>
<div style="left:1706px;top:279.8px;width:2px;height:172.2px;background:#0088cc;"></div>
<div style="left:1721px;top:279.8px;width:2px;height:172.2px;background:#0078b6;"></div>
<div style="left:1735px;top:279.8px;width:2px;height:172.2px;background:#0088cc;"></div>
<div style="left:1749px;top:279.8px;width:2px;height:172.2px;background:#0088cc;"></div>
<div style="left:1764px;top:279.8px;width:2px;height:172.2px;background:#0088cc;"></div>
<div style="left:1778px;top:279.8px;width:2px;height:172.2px;background:#005e8e;"></div>
<div style="left:1792px;top:279.8px;width:2px;height:172.2px;background:#0088cc;"></div>
<div style="left:1807px;top:279.8px;width:2px;height:172.2px;background:#0088cc;"></div>
<div style="left:1821px;top:279.8px;width:2px;height:172.2px;background:#0088cc;"></div>
<div style="left:1836px;top:279.8px;width:2px;height:172.2px;background:#0078b6;"></div>
<div style="left:1850px;top:279.8px;width:2px;height:172.2px;background:#0088cc;"></div>
<div style="left:1865px;top:279.8px;width:2px;height:172.2px;background:#0088cc;"></div>
<div style="left:1879px;top:279.8px;width:2px;height:172.2px;background:#0088cc;"></div>
<div style="left:1894px;top:279.8px;width:2px;height:172.2px;background:#0078b6;"></div>
<div style="left:1908px;top:279.8px;width:2px;height:172.2px;background:#0088cc;"></div>
<div style="left:1922px;top:279.8px;width:2px;height:172.2px;background:#0088cc;"></div>
<div style="left:1937px;top:279.8px;width:2px;height:172.2px;background:#0088cc;"></div>
<div style="left:1951px;top:279.8px;width:2px;height:172.2px;background:#0078b6;"></div>
<div style="left:1966px;top:279.8px;width:2px;height:172.2px;background:#0088cc;"></div>
<div style="left:1033px;top:286px;width:61px;height:18px;background:#1a1e20;"></div>
<div style="left:1958px;top:286px;width:18px;height:18px;background:#1a1e20;"></div>
<div style="left:1003px;top:326px;width:21px;height:18px;background:#1a1e20;"></div>
<div style="left:1555px;top:326px;width:398px;height:18px;background:#1a1e20;"></div>
<div style="left:162px;top:426px;width:340px;height:18px;background:#1a1e20;"></div>
<div style="left:1093px;top:426px;width:445px;height:18px;background:#1a1e20;"></div>
<div style="left:162px;top:452px;width:1814px;height:4px;background:#222222;"></div>
<div style="left:162px;top:456px;width:1814px;height:32px;background:#e5449a;"></div>
<div style="left:162px;top:456px;width:1814px;height:1.7px;background:#6a1f48;"></div>
<div style="left:1086px;top:456px;width:2px;height:7px;background:#3a0c22;"></div>
<div class="t" style="left:166.5px;top:462.12px;font-size:20.3px;line-height:20.3px;color:#1e0a14;font-weight:normal;letter-spacing:0.95px;">8-Acuff Kit 1</div>
<div style="left:162px;top:488px;width:1814px;height:6px;background:#232323;"></div>
<div style="left:162px;top:494px;width:1814px;height:34px;background:#2d2d2d;"></div>
<div style="left:175px;top:494px;width:2px;height:34px;background:#2a2a2a;"></div>
<div style="left:190px;top:494px;width:2px;height:34px;background:#2a2a2a;"></div>
<div style="left:204px;top:494px;width:2px;height:34px;background:#2a2a2a;"></div>
<div style="left:219px;top:494px;width:2px;height:34px;background:#282828;"></div>
<div style="left:233px;top:494px;width:2px;height:34px;background:#2a2a2a;"></div>
<div style="left:248px;top:494px;width:2px;height:34px;background:#2a2a2a;"></div>
<div style="left:262px;top:494px;width:2px;height:34px;background:#2a2a2a;"></div>
<div style="left:277px;top:494px;width:2px;height:34px;background:#282828;"></div>
<div style="left:291px;top:494px;width:2px;height:34px;background:#2a2a2a;"></div>
<div style="left:305px;top:494px;width:2px;height:34px;background:#2a2a2a;"></div>
<div style="left:320px;top:494px;width:2px;height:34px;background:#2a2a2a;"></div>
<div style="left:334px;top:494px;width:2px;height:34px;background:#282828;"></div>
<div style="left:349px;top:494px;width:2px;height:34px;background:#2a2a2a;"></div>
<div style="left:363px;top:494px;width:2px;height:34px;background:#2a2a2a;"></div>
<div style="left:378px;top:494px;width:2px;height:34px;background:#2a2a2a;"></div>
<div style="left:392px;top:494px;width:2px;height:34px;background:#222222;"></div>
<div style="left:406px;top:494px;width:2px;height:34px;background:#2a2a2a;"></div>
<div style="left:421px;top:494px;width:2px;height:34px;background:#2a2a2a;"></div>
<div style="left:435px;top:494px;width:2px;height:34px;background:#2a2a2a;"></div>
<div style="left:450px;top:494px;width:2px;height:34px;background:#282828;"></div>
<div style="left:464px;top:494px;width:2px;height:34px;background:#2a2a2a;"></div>
<div style="left:479px;top:494px;width:2px;height:34px;background:#2a2a2a;"></div>
<div style="left:493px;top:494px;width:2px;height:34px;background:#2a2a2a;"></div>
<div style="left:508px;top:494px;width:2px;height:34px;background:#282828;"></div>
<div style="left:522px;top:494px;width:2px;height:34px;background:#2a2a2a;"></div>
<div style="left:536px;top:494px;width:2px;height:34px;background:#2a2a2a;"></div>
<div style="left:551px;top:494px;width:2px;height:34px;background:#2a2a2a;"></div>
<div style="left:565px;top:494px;width:2px;height:34px;background:#282828;"></div>
<div style="left:580px;top:494px;width:2px;height:34px;background:#2a2a2a;"></div>
<div style="left:594px;top:494px;width:2px;height:34px;background:#2a2a2a;"></div>
<div style="left:609px;top:494px;width:2px;height:34px;background:#2a2a2a;"></div>
<div style="left:623px;top:494px;width:2px;height:34px;background:#222222;"></div>
<div style="left:638px;top:494px;width:2px;height:34px;background:#2a2a2a;"></div>
<div style="left:652px;top:494px;width:2px;height:34px;background:#2a2a2a;"></div>
<div style="left:667px;top:494px;width:2px;height:34px;background:#2a2a2a;"></div>
<div style="left:681px;top:494px;width:2px;height:34px;background:#282828;"></div>
<div style="left:696px;top:494px;width:2px;height:34px;background:#2a2a2a;"></div>
<div style="left:710px;top:494px;width:2px;height:34px;background:#2a2a2a;"></div>
<div style="left:725px;top:494px;width:2px;height:34px;background:#2a2a2a;"></div>
<div style="left:739px;top:494px;width:2px;height:34px;background:#282828;"></div>
<div style="left:754px;top:494px;width:2px;height:34px;background:#2a2a2a;"></div>
<div style="left:768px;top:494px;width:2px;height:34px;background:#2a2a2a;"></div>
<div style="left:783px;top:494px;width:2px;height:34px;background:#2a2a2a;"></div>
<div style="left:797px;top:494px;width:2px;height:34px;background:#282828;"></div>
<div style="left:812px;top:494px;width:2px;height:34px;background:#2a2a2a;"></div>
<div style="left:826px;top:494px;width:2px;height:34px;background:#2a2a2a;"></div>
<div style="left:841px;top:494px;width:2px;height:34px;background:#2a2a2a;"></div>
<div style="left:855px;top:494px;width:2px;height:34px;background:#222222;"></div>
<div style="left:869px;top:494px;width:2px;height:34px;background:#2a2a2a;"></div>
<div style="left:884px;top:494px;width:2px;height:34px;background:#2a2a2a;"></div>
<div style="left:898px;top:494px;width:2px;height:34px;background:#2a2a2a;"></div>
<div style="left:913px;top:494px;width:2px;height:34px;background:#282828;"></div>
<div style="left:927px;top:494px;width:2px;height:34px;background:#2a2a2a;"></div>
<div style="left:942px;top:494px;width:2px;height:34px;background:#2a2a2a;"></div>
<div style="left:956px;top:494px;width:2px;height:34px;background:#2a2a2a;"></div>
<div style="left:971px;top:494px;width:2px;height:34px;background:#282828;"></div>
<div style="left:985px;top:494px;width:2px;height:34px;background:#2a2a2a;"></div>
<div style="left:999px;top:494px;width:2px;height:34px;background:#2a2a2a;"></div>
<div style="left:1014px;top:494px;width:2px;height:34px;background:#2a2a2a;"></div>
<div style="left:1028px;top:494px;width:2px;height:34px;background:#282828;"></div>
<div style="left:1043px;top:494px;width:2px;height:34px;background:#2a2a2a;"></div>
<div style="left:1057px;top:494px;width:2px;height:34px;background:#2a2a2a;"></div>
<div style="left:1072px;top:494px;width:2px;height:34px;background:#2a2a2a;"></div>
<div style="left:1086px;top:494px;width:2px;height:34px;background:#222222;"></div>
<div style="left:1100px;top:494px;width:2px;height:34px;background:#2a2a2a;"></div>
<div style="left:1115px;top:494px;width:2px;height:34px;background:#2a2a2a;"></div>
<div style="left:1129px;top:494px;width:2px;height:34px;background:#2a2a2a;"></div>
<div style="left:1144px;top:494px;width:2px;height:34px;background:#282828;"></div>
<div style="left:1158px;top:494px;width:2px;height:34px;background:#2a2a2a;"></div>
<div style="left:1173px;top:494px;width:2px;height:34px;background:#2a2a2a;"></div>
<div style="left:1187px;top:494px;width:2px;height:34px;background:#2a2a2a;"></div>
<div style="left:1202px;top:494px;width:2px;height:34px;background:#282828;"></div>
<div style="left:1216px;top:494px;width:2px;height:34px;background:#2a2a2a;"></div>
<div style="left:1230px;top:494px;width:2px;height:34px;background:#2a2a2a;"></div>
<div style="left:1245px;top:494px;width:2px;height:34px;background:#2a2a2a;"></div>
<div style="left:1259px;top:494px;width:2px;height:34px;background:#282828;"></div>
<div style="left:1274px;top:494px;width:2px;height:34px;background:#2a2a2a;"></div>
<div style="left:1288px;top:494px;width:2px;height:34px;background:#2a2a2a;"></div>
<div style="left:1303px;top:494px;width:2px;height:34px;background:#2a2a2a;"></div>
<div style="left:1317px;top:494px;width:2px;height:34px;background:#222222;"></div>
<div style="left:1331px;top:494px;width:2px;height:34px;background:#2a2a2a;"></div>
<div style="left:1346px;top:494px;width:2px;height:34px;background:#2a2a2a;"></div>
<div style="left:1360px;top:494px;width:2px;height:34px;background:#2a2a2a;"></div>
<div style="left:1375px;top:494px;width:2px;height:34px;background:#282828;"></div>
<div style="left:1389px;top:494px;width:2px;height:34px;background:#2a2a2a;"></div>
<div style="left:1404px;top:494px;width:2px;height:34px;background:#2a2a2a;"></div>
<div style="left:1418px;top:494px;width:2px;height:34px;background:#2a2a2a;"></div>
<div style="left:1433px;top:494px;width:2px;height:34px;background:#282828;"></div>
<div style="left:1447px;top:494px;width:2px;height:34px;background:#2a2a2a;"></div>
<div style="left:1461px;top:494px;width:2px;height:34px;background:#2a2a2a;"></div>
<div style="left:1476px;top:494px;width:2px;height:34px;background:#2a2a2a;"></div>
<div style="left:1490px;top:494px;width:2px;height:34px;background:#282828;"></div>
<div style="left:1505px;top:494px;width:2px;height:34px;background:#2a2a2a;"></div>
<div style="left:1519px;top:494px;width:2px;height:34px;background:#2a2a2a;"></div>
<div style="left:1534px;top:494px;width:2px;height:34px;background:#2a2a2a;"></div>
<div style="left:1548px;top:494px;width:2px;height:34px;background:#222222;"></div>
<div style="left:1562px;top:494px;width:2px;height:34px;background:#2a2a2a;"></div>
<div style="left:1577px;top:494px;width:2px;height:34px;background:#2a2a2a;"></div>
<div style="left:1591px;top:494px;width:2px;height:34px;background:#2a2a2a;"></div>
<div style="left:1606px;top:494px;width:2px;height:34px;background:#282828;"></div>
<div style="left:1620px;top:494px;width:2px;height:34px;background:#2a2a2a;"></div>
<div style="left:1634px;top:494px;width:2px;height:34px;background:#2a2a2a;"></div>
<div style="left:1649px;top:494px;width:2px;height:34px;background:#2a2a2a;"></div>
<div style="left:1663px;top:494px;width:2px;height:34px;background:#282828;"></div>
<div style="left:1677px;top:494px;width:2px;height:34px;background:#2a2a2a;"></div>
<div style="left:1692px;top:494px;width:2px;height:34px;background:#2a2a2a;"></div>
<div style="left:1706px;top:494px;width:2px;height:34px;background:#2a2a2a;"></div>
<div style="left:1721px;top:494px;width:2px;height:34px;background:#282828;"></div>
<div style="left:1735px;top:494px;width:2px;height:34px;background:#2a2a2a;"></div>
<div style="left:1749px;top:494px;width:2px;height:34px;background:#2a2a2a;"></div>
<div style="left:1764px;top:494px;width:2px;height:34px;background:#2a2a2a;"></div>
<div style="left:1778px;top:494px;width:2px;height:34px;background:#222222;"></div>
<div style="left:1792px;top:494px;width:2px;height:34px;background:#2a2a2a;"></div>
<div style="left:1807px;top:494px;width:2px;height:34px;background:#2a2a2a;"></div>
<div style="left:1821px;top:494px;width:2px;height:34px;background:#2a2a2a;"></div>
<div style="left:1836px;top:494px;width:2px;height:34px;background:#282828;"></div>
<div style="left:1850px;top:494px;width:2px;height:34px;background:#2a2a2a;"></div>
<div style="left:1865px;top:494px;width:2px;height:34px;background:#2a2a2a;"></div>
<div style="left:1879px;top:494px;width:2px;height:34px;background:#2a2a2a;"></div>
<div style="left:1894px;top:494px;width:2px;height:34px;background:#282828;"></div>
<div style="left:1908px;top:494px;width:2px;height:34px;background:#2a2a2a;"></div>
<div style="left:1922px;top:494px;width:2px;height:34px;background:#2a2a2a;"></div>
<div style="left:1937px;top:494px;width:2px;height:34px;background:#2a2a2a;"></div>
<div style="left:1951px;top:494px;width:2px;height:34px;background:#282828;"></div>
<div style="left:1966px;top:494px;width:2px;height:34px;background:#2a2a2a;"></div>
<div style="left:162px;top:528px;width:1814px;height:4px;background:#212121;"></div>
<div style="left:162px;top:532px;width:1814px;height:34px;background:#2d2d2d;"></div>
<div style="left:175px;top:532px;width:2px;height:34px;background:#2a2a2a;"></div>
<div style="left:190px;top:532px;width:2px;height:34px;background:#2a2a2a;"></div>
<div style="left:204px;top:532px;width:2px;height:34px;background:#2a2a2a;"></div>
<div style="left:219px;top:532px;width:2px;height:34px;background:#282828;"></div>
<div style="left:233px;top:532px;width:2px;height:34px;background:#2a2a2a;"></div>
<div style="left:248px;top:532px;width:2px;height:34px;background:#2a2a2a;"></div>
<div style="left:262px;top:532px;width:2px;height:34px;background:#2a2a2a;"></div>
<div style="left:277px;top:532px;width:2px;height:34px;background:#282828;"></div>
<div style="left:291px;top:532px;width:2px;height:34px;background:#2a2a2a;"></div>
<div style="left:305px;top:532px;width:2px;height:34px;background:#2a2a2a;"></div>
<div style="left:320px;top:532px;width:2px;height:34px;background:#2a2a2a;"></div>
<div style="left:334px;top:532px;width:2px;height:34px;background:#282828;"></div>
<div style="left:349px;top:532px;width:2px;height:34px;background:#2a2a2a;"></div>
<div style="left:363px;top:532px;width:2px;height:34px;background:#2a2a2a;"></div>
<div style="left:378px;top:532px;width:2px;height:34px;background:#2a2a2a;"></div>
<div style="left:392px;top:532px;width:2px;height:34px;background:#222222;"></div>
<div style="left:406px;top:532px;width:2px;height:34px;background:#2a2a2a;"></div>
<div style="left:421px;top:532px;width:2px;height:34px;background:#2a2a2a;"></div>
<div style="left:435px;top:532px;width:2px;height:34px;background:#2a2a2a;"></div>
<div style="left:450px;top:532px;width:2px;height:34px;background:#282828;"></div>
<div style="left:464px;top:532px;width:2px;height:34px;background:#2a2a2a;"></div>
<div style="left:479px;top:532px;width:2px;height:34px;background:#2a2a2a;"></div>
<div style="left:493px;top:532px;width:2px;height:34px;background:#2a2a2a;"></div>
<div style="left:508px;top:532px;width:2px;height:34px;background:#282828;"></div>
<div style="left:522px;top:532px;width:2px;height:34px;background:#2a2a2a;"></div>
<div style="left:536px;top:532px;width:2px;height:34px;background:#2a2a2a;"></div>
<div style="left:551px;top:532px;width:2px;height:34px;background:#2a2a2a;"></div>
<div style="left:565px;top:532px;width:2px;height:34px;background:#282828;"></div>
<div style="left:580px;top:532px;width:2px;height:34px;background:#2a2a2a;"></div>
<div style="left:594px;top:532px;width:2px;height:34px;background:#2a2a2a;"></div>
<div style="left:609px;top:532px;width:2px;height:34px;background:#2a2a2a;"></div>
<div style="left:623px;top:532px;width:2px;height:34px;background:#222222;"></div>
<div style="left:638px;top:532px;width:2px;height:34px;background:#2a2a2a;"></div>
<div style="left:652px;top:532px;width:2px;height:34px;background:#2a2a2a;"></div>
<div style="left:667px;top:532px;width:2px;height:34px;background:#2a2a2a;"></div>
<div style="left:681px;top:532px;width:2px;height:34px;background:#282828;"></div>
<div style="left:696px;top:532px;width:2px;height:34px;background:#2a2a2a;"></div>
<div style="left:710px;top:532px;width:2px;height:34px;background:#2a2a2a;"></div>
<div style="left:725px;top:532px;width:2px;height:34px;background:#2a2a2a;"></div>
<div style="left:739px;top:532px;width:2px;height:34px;background:#282828;"></div>
<div style="left:754px;top:532px;width:2px;height:34px;background:#2a2a2a;"></div>
<div style="left:768px;top:532px;width:2px;height:34px;background:#2a2a2a;"></div>
<div style="left:783px;top:532px;width:2px;height:34px;background:#2a2a2a;"></div>
<div style="left:797px;top:532px;width:2px;height:34px;background:#282828;"></div>
<div style="left:812px;top:532px;width:2px;height:34px;background:#2a2a2a;"></div>
<div style="left:826px;top:532px;width:2px;height:34px;background:#2a2a2a;"></div>
<div style="left:841px;top:532px;width:2px;height:34px;background:#2a2a2a;"></div>
<div style="left:855px;top:532px;width:2px;height:34px;background:#222222;"></div>
<div style="left:869px;top:532px;width:2px;height:34px;background:#2a2a2a;"></div>
<div style="left:884px;top:532px;width:2px;height:34px;background:#2a2a2a;"></div>
<div style="left:898px;top:532px;width:2px;height:34px;background:#2a2a2a;"></div>
<div style="left:913px;top:532px;width:2px;height:34px;background:#282828;"></div>
<div style="left:927px;top:532px;width:2px;height:34px;background:#2a2a2a;"></div>
<div style="left:942px;top:532px;width:2px;height:34px;background:#2a2a2a;"></div>
<div style="left:956px;top:532px;width:2px;height:34px;background:#2a2a2a;"></div>
<div style="left:971px;top:532px;width:2px;height:34px;background:#282828;"></div>
<div style="left:985px;top:532px;width:2px;height:34px;background:#2a2a2a;"></div>
<div style="left:999px;top:532px;width:2px;height:34px;background:#2a2a2a;"></div>
<div style="left:1014px;top:532px;width:2px;height:34px;background:#2a2a2a;"></div>
<div style="left:1028px;top:532px;width:2px;height:34px;background:#282828;"></div>
<div style="left:1043px;top:532px;width:2px;height:34px;background:#2a2a2a;"></div>
<div style="left:1057px;top:532px;width:2px;height:34px;background:#2a2a2a;"></div>
<div style="left:1072px;top:532px;width:2px;height:34px;background:#2a2a2a;"></div>
<div style="left:1086px;top:532px;width:2px;height:34px;background:#222222;"></div>
<div style="left:1100px;top:532px;width:2px;height:34px;background:#2a2a2a;"></div>
<div style="left:1115px;top:532px;width:2px;height:34px;background:#2a2a2a;"></div>
<div style="left:1129px;top:532px;width:2px;height:34px;background:#2a2a2a;"></div>
<div style="left:1144px;top:532px;width:2px;height:34px;background:#282828;"></div>
<div style="left:1158px;top:532px;width:2px;height:34px;background:#2a2a2a;"></div>
<div style="left:1173px;top:532px;width:2px;height:34px;background:#2a2a2a;"></div>
<div style="left:1187px;top:532px;width:2px;height:34px;background:#2a2a2a;"></div>
<div style="left:1202px;top:532px;width:2px;height:34px;background:#282828;"></div>
<div style="left:1216px;top:532px;width:2px;height:34px;background:#2a2a2a;"></div>
<div style="left:1230px;top:532px;width:2px;height:34px;background:#2a2a2a;"></div>
<div style="left:1245px;top:532px;width:2px;height:34px;background:#2a2a2a;"></div>
<div style="left:1259px;top:532px;width:2px;height:34px;background:#282828;"></div>
<div style="left:1274px;top:532px;width:2px;height:34px;background:#2a2a2a;"></div>
<div style="left:1288px;top:532px;width:2px;height:34px;background:#2a2a2a;"></div>
<div style="left:1303px;top:532px;width:2px;height:34px;background:#2a2a2a;"></div>
<div style="left:1317px;top:532px;width:2px;height:34px;background:#222222;"></div>
<div style="left:1331px;top:532px;width:2px;height:34px;background:#2a2a2a;"></div>
<div style="left:1346px;top:532px;width:2px;height:34px;background:#2a2a2a;"></div>
<div style="left:1360px;top:532px;width:2px;height:34px;background:#2a2a2a;"></div>
<div style="left:1375px;top:532px;width:2px;height:34px;background:#282828;"></div>
<div style="left:1389px;top:532px;width:2px;height:34px;background:#2a2a2a;"></div>
<div style="left:1404px;top:532px;width:2px;height:34px;background:#2a2a2a;"></div>
<div style="left:1418px;top:532px;width:2px;height:34px;background:#2a2a2a;"></div>
<div style="left:1433px;top:532px;width:2px;height:34px;background:#282828;"></div>
<div style="left:1447px;top:532px;width:2px;height:34px;background:#2a2a2a;"></div>
<div style="left:1461px;top:532px;width:2px;height:34px;background:#2a2a2a;"></div>
<div style="left:1476px;top:532px;width:2px;height:34px;background:#2a2a2a;"></div>
<div style="left:1490px;top:532px;width:2px;height:34px;background:#282828;"></div>
<div style="left:1505px;top:532px;width:2px;height:34px;background:#2a2a2a;"></div>
<div style="left:1519px;top:532px;width:2px;height:34px;background:#2a2a2a;"></div>
<div style="left:1534px;top:532px;width:2px;height:34px;background:#2a2a2a;"></div>
<div style="left:1548px;top:532px;width:2px;height:34px;background:#222222;"></div>
<div style="left:1562px;top:532px;width:2px;height:34px;background:#2a2a2a;"></div>
<div style="left:1577px;top:532px;width:2px;height:34px;background:#2a2a2a;"></div>
<div style="left:1591px;top:532px;width:2px;height:34px;background:#2a2a2a;"></div>
<div style="left:1606px;top:532px;width:2px;height:34px;background:#282828;"></div>
<div style="left:1620px;top:532px;width:2px;height:34px;background:#2a2a2a;"></div>
<div style="left:1634px;top:532px;width:2px;height:34px;background:#2a2a2a;"></div>
<div style="left:1649px;top:532px;width:2px;height:34px;background:#2a2a2a;"></div>
<div style="left:1663px;top:532px;width:2px;height:34px;background:#282828;"></div>
<div style="left:1677px;top:532px;width:2px;height:34px;background:#2a2a2a;"></div>
<div style="left:1692px;top:532px;width:2px;height:34px;background:#2a2a2a;"></div>
<div style="left:1706px;top:532px;width:2px;height:34px;background:#2a2a2a;"></div>
<div style="left:1721px;top:532px;width:2px;height:34px;background:#282828;"></div>
<div style="left:1735px;top:532px;width:2px;height:34px;background:#2a2a2a;"></div>
<div style="left:1749px;top:532px;width:2px;height:34px;background:#2a2a2a;"></div>
<div style="left:1764px;top:532px;width:2px;height:34px;background:#2a2a2a;"></div>
<div style="left:1778px;top:532px;width:2px;height:34px;background:#222222;"></div>
<div style="left:1792px;top:532px;width:2px;height:34px;background:#2a2a2a;"></div>
<div style="left:1807px;top:532px;width:2px;height:34px;background:#2a2a2a;"></div>
<div style="left:1821px;top:532px;width:2px;height:34px;background:#2a2a2a;"></div>
<div style="left:1836px;top:532px;width:2px;height:34px;background:#282828;"></div>
<div style="left:1850px;top:532px;width:2px;height:34px;background:#2a2a2a;"></div>
<div style="left:1865px;top:532px;width:2px;height:34px;background:#2a2a2a;"></div>
<div style="left:1879px;top:532px;width:2px;height:34px;background:#2a2a2a;"></div>
<div style="left:1894px;top:532px;width:2px;height:34px;background:#282828;"></div>
<div style="left:1908px;top:532px;width:2px;height:34px;background:#2a2a2a;"></div>
<div style="left:1922px;top:532px;width:2px;height:34px;background:#2a2a2a;"></div>
<div style="left:1937px;top:532px;width:2px;height:34px;background:#2a2a2a;"></div>
<div style="left:1951px;top:532px;width:2px;height:34px;background:#282828;"></div>
<div style="left:1966px;top:532px;width:2px;height:34px;background:#2a2a2a;"></div>
<div style="left:162px;top:566px;width:1814px;height:4px;background:#212121;"></div>
<div style="left:162px;top:570px;width:1814px;height:34px;background:#2d2d2d;"></div>
<div style="left:175px;top:570px;width:2px;height:34px;background:#2a2a2a;"></div>
<div style="left:190px;top:570px;width:2px;height:34px;background:#2a2a2a;"></div>
<div style="left:204px;top:570px;width:2px;height:34px;background:#2a2a2a;"></div>
<div style="left:219px;top:570px;width:2px;height:34px;background:#282828;"></div>
<div style="left:233px;top:570px;width:2px;height:34px;background:#2a2a2a;"></div>
<div style="left:248px;top:570px;width:2px;height:34px;background:#2a2a2a;"></div>
<div style="left:262px;top:570px;width:2px;height:34px;background:#2a2a2a;"></div>
<div style="left:277px;top:570px;width:2px;height:34px;background:#282828;"></div>
<div style="left:291px;top:570px;width:2px;height:34px;background:#2a2a2a;"></div>
<div style="left:305px;top:570px;width:2px;height:34px;background:#2a2a2a;"></div>
<div style="left:320px;top:570px;width:2px;height:34px;background:#2a2a2a;"></div>
<div style="left:334px;top:570px;width:2px;height:34px;background:#282828;"></div>
<div style="left:349px;top:570px;width:2px;height:34px;background:#2a2a2a;"></div>
<div style="left:363px;top:570px;width:2px;height:34px;background:#2a2a2a;"></div>
<div style="left:378px;top:570px;width:2px;height:34px;background:#2a2a2a;"></div>
<div style="left:392px;top:570px;width:2px;height:34px;background:#222222;"></div>
<div style="left:406px;top:570px;width:2px;height:34px;background:#2a2a2a;"></div>
<div style="left:421px;top:570px;width:2px;height:34px;background:#2a2a2a;"></div>
<div style="left:435px;top:570px;width:2px;height:34px;background:#2a2a2a;"></div>
<div style="left:450px;top:570px;width:2px;height:34px;background:#282828;"></div>
<div style="left:464px;top:570px;width:2px;height:34px;background:#2a2a2a;"></div>
<div style="left:479px;top:570px;width:2px;height:34px;background:#2a2a2a;"></div>
<div style="left:493px;top:570px;width:2px;height:34px;background:#2a2a2a;"></div>
<div style="left:508px;top:570px;width:2px;height:34px;background:#282828;"></div>
<div style="left:522px;top:570px;width:2px;height:34px;background:#2a2a2a;"></div>
<div style="left:536px;top:570px;width:2px;height:34px;background:#2a2a2a;"></div>
<div style="left:551px;top:570px;width:2px;height:34px;background:#2a2a2a;"></div>
<div style="left:565px;top:570px;width:2px;height:34px;background:#282828;"></div>
<div style="left:580px;top:570px;width:2px;height:34px;background:#2a2a2a;"></div>
<div style="left:594px;top:570px;width:2px;height:34px;background:#2a2a2a;"></div>
<div style="left:609px;top:570px;width:2px;height:34px;background:#2a2a2a;"></div>
<div style="left:623px;top:570px;width:2px;height:34px;background:#222222;"></div>
<div style="left:638px;top:570px;width:2px;height:34px;background:#2a2a2a;"></div>
<div style="left:652px;top:570px;width:2px;height:34px;background:#2a2a2a;"></div>
<div style="left:667px;top:570px;width:2px;height:34px;background:#2a2a2a;"></div>
<div style="left:681px;top:570px;width:2px;height:34px;background:#282828;"></div>
<div style="left:696px;top:570px;width:2px;height:34px;background:#2a2a2a;"></div>
<div style="left:710px;top:570px;width:2px;height:34px;background:#2a2a2a;"></div>
<div style="left:725px;top:570px;width:2px;height:34px;background:#2a2a2a;"></div>
<div style="left:739px;top:570px;width:2px;height:34px;background:#282828;"></div>
<div style="left:754px;top:570px;width:2px;height:34px;background:#2a2a2a;"></div>
<div style="left:768px;top:570px;width:2px;height:34px;background:#2a2a2a;"></div>
<div style="left:783px;top:570px;width:2px;height:34px;background:#2a2a2a;"></div>
<div style="left:797px;top:570px;width:2px;height:34px;background:#282828;"></div>
<div style="left:812px;top:570px;width:2px;height:34px;background:#2a2a2a;"></div>
<div style="left:826px;top:570px;width:2px;height:34px;background:#2a2a2a;"></div>
<div style="left:841px;top:570px;width:2px;height:34px;background:#2a2a2a;"></div>
<div style="left:855px;top:570px;width:2px;height:34px;background:#222222;"></div>
<div style="left:869px;top:570px;width:2px;height:34px;background:#2a2a2a;"></div>
<div style="left:884px;top:570px;width:2px;height:34px;background:#2a2a2a;"></div>
<div style="left:898px;top:570px;width:2px;height:34px;background:#2a2a2a;"></div>
<div style="left:913px;top:570px;width:2px;height:34px;background:#282828;"></div>
<div style="left:927px;top:570px;width:2px;height:34px;background:#2a2a2a;"></div>
<div style="left:942px;top:570px;width:2px;height:34px;background:#2a2a2a;"></div>
<div style="left:956px;top:570px;width:2px;height:34px;background:#2a2a2a;"></div>
<div style="left:971px;top:570px;width:2px;height:34px;background:#282828;"></div>
<div style="left:985px;top:570px;width:2px;height:34px;background:#2a2a2a;"></div>
<div style="left:999px;top:570px;width:2px;height:34px;background:#2a2a2a;"></div>
<div style="left:1014px;top:570px;width:2px;height:34px;background:#2a2a2a;"></div>
<div style="left:1028px;top:570px;width:2px;height:34px;background:#282828;"></div>
<div style="left:1043px;top:570px;width:2px;height:34px;background:#2a2a2a;"></div>
<div style="left:1057px;top:570px;width:2px;height:34px;background:#2a2a2a;"></div>
<div style="left:1072px;top:570px;width:2px;height:34px;background:#2a2a2a;"></div>
<div style="left:1086px;top:570px;width:2px;height:34px;background:#222222;"></div>
<div style="left:1100px;top:570px;width:2px;height:34px;background:#2a2a2a;"></div>
<div style="left:1115px;top:570px;width:2px;height:34px;background:#2a2a2a;"></div>
<div style="left:1129px;top:570px;width:2px;height:34px;background:#2a2a2a;"></div>
<div style="left:1144px;top:570px;width:2px;height:34px;background:#282828;"></div>
<div style="left:1158px;top:570px;width:2px;height:34px;background:#2a2a2a;"></div>
<div style="left:1173px;top:570px;width:2px;height:34px;background:#2a2a2a;"></div>
<div style="left:1187px;top:570px;width:2px;height:34px;background:#2a2a2a;"></div>
<div style="left:1202px;top:570px;width:2px;height:34px;background:#282828;"></div>
<div style="left:1216px;top:570px;width:2px;height:34px;background:#2a2a2a;"></div>
<div style="left:1230px;top:570px;width:2px;height:34px;background:#2a2a2a;"></div>
<div style="left:1245px;top:570px;width:2px;height:34px;background:#2a2a2a;"></div>
<div style="left:1259px;top:570px;width:2px;height:34px;background:#282828;"></div>
<div style="left:1274px;top:570px;width:2px;height:34px;background:#2a2a2a;"></div>
<div style="left:1288px;top:570px;width:2px;height:34px;background:#2a2a2a;"></div>
<div style="left:1303px;top:570px;width:2px;height:34px;background:#2a2a2a;"></div>
<div style="left:1317px;top:570px;width:2px;height:34px;background:#222222;"></div>
<div style="left:1331px;top:570px;width:2px;height:34px;background:#2a2a2a;"></div>
<div style="left:1346px;top:570px;width:2px;height:34px;background:#2a2a2a;"></div>
<div style="left:1360px;top:570px;width:2px;height:34px;background:#2a2a2a;"></div>
<div style="left:1375px;top:570px;width:2px;height:34px;background:#282828;"></div>
<div style="left:1389px;top:570px;width:2px;height:34px;background:#2a2a2a;"></div>
<div style="left:1404px;top:570px;width:2px;height:34px;background:#2a2a2a;"></div>
<div style="left:1418px;top:570px;width:2px;height:34px;background:#2a2a2a;"></div>
<div style="left:1433px;top:570px;width:2px;height:34px;background:#282828;"></div>
<div style="left:1447px;top:570px;width:2px;height:34px;background:#2a2a2a;"></div>
<div style="left:1461px;top:570px;width:2px;height:34px;background:#2a2a2a;"></div>
<div style="left:1476px;top:570px;width:2px;height:34px;background:#2a2a2a;"></div>
<div style="left:1490px;top:570px;width:2px;height:34px;background:#282828;"></div>
<div style="left:1505px;top:570px;width:2px;height:34px;background:#2a2a2a;"></div>
<div style="left:1519px;top:570px;width:2px;height:34px;background:#2a2a2a;"></div>
<div style="left:1534px;top:570px;width:2px;height:34px;background:#2a2a2a;"></div>
<div style="left:1548px;top:570px;width:2px;height:34px;background:#222222;"></div>
<div style="left:1562px;top:570px;width:2px;height:34px;background:#2a2a2a;"></div>
<div style="left:1577px;top:570px;width:2px;height:34px;background:#2a2a2a;"></div>
<div style="left:1591px;top:570px;width:2px;height:34px;background:#2a2a2a;"></div>
<div style="left:1606px;top:570px;width:2px;height:34px;background:#282828;"></div>
<div style="left:1620px;top:570px;width:2px;height:34px;background:#2a2a2a;"></div>
<div style="left:1634px;top:570px;width:2px;height:34px;background:#2a2a2a;"></div>
<div style="left:1649px;top:570px;width:2px;height:34px;background:#2a2a2a;"></div>
<div style="left:1663px;top:570px;width:2px;height:34px;background:#282828;"></div>
<div style="left:1677px;top:570px;width:2px;height:34px;background:#2a2a2a;"></div>
<div style="left:1692px;top:570px;width:2px;height:34px;background:#2a2a2a;"></div>
<div style="left:1706px;top:570px;width:2px;height:34px;background:#2a2a2a;"></div>
<div style="left:1721px;top:570px;width:2px;height:34px;background:#282828;"></div>
<div style="left:1735px;top:570px;width:2px;height:34px;background:#2a2a2a;"></div>
<div style="left:1749px;top:570px;width:2px;height:34px;background:#2a2a2a;"></div>
<div style="left:1764px;top:570px;width:2px;height:34px;background:#2a2a2a;"></div>
<div style="left:1778px;top:570px;width:2px;height:34px;background:#222222;"></div>
<div style="left:1792px;top:570px;width:2px;height:34px;background:#2a2a2a;"></div>
<div style="left:1807px;top:570px;width:2px;height:34px;background:#2a2a2a;"></div>
<div style="left:1821px;top:570px;width:2px;height:34px;background:#2a2a2a;"></div>
<div style="left:1836px;top:570px;width:2px;height:34px;background:#282828;"></div>
<div style="left:1850px;top:570px;width:2px;height:34px;background:#2a2a2a;"></div>
<div style="left:1865px;top:570px;width:2px;height:34px;background:#2a2a2a;"></div>
<div style="left:1879px;top:570px;width:2px;height:34px;background:#2a2a2a;"></div>
<div style="left:1894px;top:570px;width:2px;height:34px;background:#282828;"></div>
<div style="left:1908px;top:570px;width:2px;height:34px;background:#2a2a2a;"></div>
<div style="left:1922px;top:570px;width:2px;height:34px;background:#2a2a2a;"></div>
<div style="left:1937px;top:570px;width:2px;height:34px;background:#2a2a2a;"></div>
<div style="left:1951px;top:570px;width:2px;height:34px;background:#282828;"></div>
<div style="left:1966px;top:570px;width:2px;height:34px;background:#2a2a2a;"></div>
<div style="left:162px;top:604px;width:1814px;height:4px;background:#212121;"></div>
<div style="left:162px;top:608px;width:1814px;height:34px;background:#2d2d2d;"></div>
<div style="left:175px;top:608px;width:2px;height:34px;background:#2a2a2a;"></div>
<div style="left:190px;top:608px;width:2px;height:34px;background:#2a2a2a;"></div>
<div style="left:204px;top:608px;width:2px;height:34px;background:#2a2a2a;"></div>
<div style="left:219px;top:608px;width:2px;height:34px;background:#282828;"></div>
<div style="left:233px;top:608px;width:2px;height:34px;background:#2a2a2a;"></div>
<div style="left:248px;top:608px;width:2px;height:34px;background:#2a2a2a;"></div>
<div style="left:262px;top:608px;width:2px;height:34px;background:#2a2a2a;"></div>
<div style="left:277px;top:608px;width:2px;height:34px;background:#282828;"></div>
<div style="left:291px;top:608px;width:2px;height:34px;background:#2a2a2a;"></div>
<div style="left:305px;top:608px;width:2px;height:34px;background:#2a2a2a;"></div>
<div style="left:320px;top:608px;width:2px;height:34px;background:#2a2a2a;"></div>
<div style="left:334px;top:608px;width:2px;height:34px;background:#282828;"></div>
<div style="left:349px;top:608px;width:2px;height:34px;background:#2a2a2a;"></div>
<div style="left:363px;top:608px;width:2px;height:34px;background:#2a2a2a;"></div>
<div style="left:378px;top:608px;width:2px;height:34px;background:#2a2a2a;"></div>
<div style="left:392px;top:608px;width:2px;height:34px;background:#222222;"></div>
<div style="left:406px;top:608px;width:2px;height:34px;background:#2a2a2a;"></div>
<div style="left:421px;top:608px;width:2px;height:34px;background:#2a2a2a;"></div>
<div style="left:435px;top:608px;width:2px;height:34px;background:#2a2a2a;"></div>
<div style="left:450px;top:608px;width:2px;height:34px;background:#282828;"></div>
<div style="left:464px;top:608px;width:2px;height:34px;background:#2a2a2a;"></div>
<div style="left:479px;top:608px;width:2px;height:34px;background:#2a2a2a;"></div>
<div style="left:493px;top:608px;width:2px;height:34px;background:#2a2a2a;"></div>
<div style="left:508px;top:608px;width:2px;height:34px;background:#282828;"></div>
<div style="left:522px;top:608px;width:2px;height:34px;background:#2a2a2a;"></div>
<div style="left:536px;top:608px;width:2px;height:34px;background:#2a2a2a;"></div>
<div style="left:551px;top:608px;width:2px;height:34px;background:#2a2a2a;"></div>
<div style="left:565px;top:608px;width:2px;height:34px;background:#282828;"></div>
<div style="left:580px;top:608px;width:2px;height:34px;background:#2a2a2a;"></div>
<div style="left:594px;top:608px;width:2px;height:34px;background:#2a2a2a;"></div>
<div style="left:609px;top:608px;width:2px;height:34px;background:#2a2a2a;"></div>
<div style="left:623px;top:608px;width:2px;height:34px;background:#222222;"></div>
<div style="left:638px;top:608px;width:2px;height:34px;background:#2a2a2a;"></div>
<div style="left:652px;top:608px;width:2px;height:34px;background:#2a2a2a;"></div>
<div style="left:667px;top:608px;width:2px;height:34px;background:#2a2a2a;"></div>
<div style="left:681px;top:608px;width:2px;height:34px;background:#282828;"></div>
<div style="left:696px;top:608px;width:2px;height:34px;background:#2a2a2a;"></div>
<div style="left:710px;top:608px;width:2px;height:34px;background:#2a2a2a;"></div>
<div style="left:725px;top:608px;width:2px;height:34px;background:#2a2a2a;"></div>
<div style="left:739px;top:608px;width:2px;height:34px;background:#282828;"></div>
<div style="left:754px;top:608px;width:2px;height:34px;background:#2a2a2a;"></div>
<div style="left:768px;top:608px;width:2px;height:34px;background:#2a2a2a;"></div>
<div style="left:783px;top:608px;width:2px;height:34px;background:#2a2a2a;"></div>
<div style="left:797px;top:608px;width:2px;height:34px;background:#282828;"></div>
<div style="left:812px;top:608px;width:2px;height:34px;background:#2a2a2a;"></div>
<div style="left:826px;top:608px;width:2px;height:34px;background:#2a2a2a;"></div>
<div style="left:841px;top:608px;width:2px;height:34px;background:#2a2a2a;"></div>
<div style="left:855px;top:608px;width:2px;height:34px;background:#222222;"></div>
<div style="left:869px;top:608px;width:2px;height:34px;background:#2a2a2a;"></div>
<div style="left:884px;top:608px;width:2px;height:34px;background:#2a2a2a;"></div>
<div style="left:898px;top:608px;width:2px;height:34px;background:#2a2a2a;"></div>
<div style="left:913px;top:608px;width:2px;height:34px;background:#282828;"></div>
<div style="left:927px;top:608px;width:2px;height:34px;background:#2a2a2a;"></div>
<div style="left:942px;top:608px;width:2px;height:34px;background:#2a2a2a;"></div>
<div style="left:956px;top:608px;width:2px;height:34px;background:#2a2a2a;"></div>
<div style="left:971px;top:608px;width:2px;height:34px;background:#282828;"></div>
<div style="left:985px;top:608px;width:2px;height:34px;background:#2a2a2a;"></div>
<div style="left:999px;top:608px;width:2px;height:34px;background:#2a2a2a;"></div>
<div style="left:1014px;top:608px;width:2px;height:34px;background:#2a2a2a;"></div>
<div style="left:1028px;top:608px;width:2px;height:34px;background:#282828;"></div>
<div style="left:1043px;top:608px;width:2px;height:34px;background:#2a2a2a;"></div>
<div style="left:1057px;top:608px;width:2px;height:34px;background:#2a2a2a;"></div>
<div style="left:1072px;top:608px;width:2px;height:34px;background:#2a2a2a;"></div>
<div style="left:1086px;top:608px;width:2px;height:34px;background:#222222;"></div>
<div style="left:1100px;top:608px;width:2px;height:34px;background:#2a2a2a;"></div>
<div style="left:1115px;top:608px;width:2px;height:34px;background:#2a2a2a;"></div>
<div style="left:1129px;top:608px;width:2px;height:34px;background:#2a2a2a;"></div>
<div style="left:1144px;top:608px;width:2px;height:34px;background:#282828;"></div>
<div style="left:1158px;top:608px;width:2px;height:34px;background:#2a2a2a;"></div>
<div style="left:1173px;top:608px;width:2px;height:34px;background:#2a2a2a;"></div>
<div style="left:1187px;top:608px;width:2px;height:34px;background:#2a2a2a;"></div>
<div style="left:1202px;top:608px;width:2px;height:34px;background:#282828;"></div>
<div style="left:1216px;top:608px;width:2px;height:34px;background:#2a2a2a;"></div>
<div style="left:1230px;top:608px;width:2px;height:34px;background:#2a2a2a;"></div>
<div style="left:1245px;top:608px;width:2px;height:34px;background:#2a2a2a;"></div>
<div style="left:1259px;top:608px;width:2px;height:34px;background:#282828;"></div>
<div style="left:1274px;top:608px;width:2px;height:34px;background:#2a2a2a;"></div>
<div style="left:1288px;top:608px;width:2px;height:34px;background:#2a2a2a;"></div>
<div style="left:1303px;top:608px;width:2px;height:34px;background:#2a2a2a;"></div>
<div style="left:1317px;top:608px;width:2px;height:34px;background:#222222;"></div>
<div style="left:1331px;top:608px;width:2px;height:34px;background:#2a2a2a;"></div>
<div style="left:1346px;top:608px;width:2px;height:34px;background:#2a2a2a;"></div>
<div style="left:1360px;top:608px;width:2px;height:34px;background:#2a2a2a;"></div>
<div style="left:1375px;top:608px;width:2px;height:34px;background:#282828;"></div>
<div style="left:1389px;top:608px;width:2px;height:34px;background:#2a2a2a;"></div>
<div style="left:1404px;top:608px;width:2px;height:34px;background:#2a2a2a;"></div>
<div style="left:1418px;top:608px;width:2px;height:34px;background:#2a2a2a;"></div>
<div style="left:1433px;top:608px;width:2px;height:34px;background:#282828;"></div>
<div style="left:1447px;top:608px;width:2px;height:34px;background:#2a2a2a;"></div>
<div style="left:1461px;top:608px;width:2px;height:34px;background:#2a2a2a;"></div>
<div style="left:1476px;top:608px;width:2px;height:34px;background:#2a2a2a;"></div>
<div style="left:1490px;top:608px;width:2px;height:34px;background:#282828;"></div>
<div style="left:1505px;top:608px;width:2px;height:34px;background:#2a2a2a;"></div>
<div style="left:1519px;top:608px;width:2px;height:34px;background:#2a2a2a;"></div>
<div style="left:1534px;top:608px;width:2px;height:34px;background:#2a2a2a;"></div>
<div style="left:1548px;top:608px;width:2px;height:34px;background:#222222;"></div>
<div style="left:1562px;top:608px;width:2px;height:34px;background:#2a2a2a;"></div>
<div style="left:1577px;top:608px;width:2px;height:34px;background:#2a2a2a;"></div>
<div style="left:1591px;top:608px;width:2px;height:34px;background:#2a2a2a;"></div>
<div style="left:1606px;top:608px;width:2px;height:34px;background:#282828;"></div>
<div style="left:1620px;top:608px;width:2px;height:34px;background:#2a2a2a;"></div>
<div style="left:1634px;top:608px;width:2px;height:34px;background:#2a2a2a;"></div>
<div style="left:1649px;top:608px;width:2px;height:34px;background:#2a2a2a;"></div>
<div style="left:1663px;top:608px;width:2px;height:34px;background:#282828;"></div>
<div style="left:1677px;top:608px;width:2px;height:34px;background:#2a2a2a;"></div>
<div style="left:1692px;top:608px;width:2px;height:34px;background:#2a2a2a;"></div>
<div style="left:1706px;top:608px;width:2px;height:34px;background:#2a2a2a;"></div>
<div style="left:1721px;top:608px;width:2px;height:34px;background:#282828;"></div>
<div style="left:1735px;top:608px;width:2px;height:34px;background:#2a2a2a;"></div>
<div style="left:1749px;top:608px;width:2px;height:34px;background:#2a2a2a;"></div>
<div style="left:1764px;top:608px;width:2px;height:34px;background:#2a2a2a;"></div>
<div style="left:1778px;top:608px;width:2px;height:34px;background:#222222;"></div>
<div style="left:1792px;top:608px;width:2px;height:34px;background:#2a2a2a;"></div>
<div style="left:1807px;top:608px;width:2px;height:34px;background:#2a2a2a;"></div>
<div style="left:1821px;top:608px;width:2px;height:34px;background:#2a2a2a;"></div>
<div style="left:1836px;top:608px;width:2px;height:34px;background:#282828;"></div>
<div style="left:1850px;top:608px;width:2px;height:34px;background:#2a2a2a;"></div>
<div style="left:1865px;top:608px;width:2px;height:34px;background:#2a2a2a;"></div>
<div style="left:1879px;top:608px;width:2px;height:34px;background:#2a2a2a;"></div>
<div style="left:1894px;top:608px;width:2px;height:34px;background:#282828;"></div>
<div style="left:1908px;top:608px;width:2px;height:34px;background:#2a2a2a;"></div>
<div style="left:1922px;top:608px;width:2px;height:34px;background:#2a2a2a;"></div>
<div style="left:1937px;top:608px;width:2px;height:34px;background:#2a2a2a;"></div>
<div style="left:1951px;top:608px;width:2px;height:34px;background:#282828;"></div>
<div style="left:1966px;top:608px;width:2px;height:34px;background:#2a2a2a;"></div>
<div style="left:162px;top:642px;width:1814px;height:4px;background:#212121;"></div>
<div style="left:162px;top:646px;width:1814px;height:42px;background:#2a2a2a;border-bottom-left-radius:4px"></div>
<div style="left:217px;top:646px;width:1.8px;height:5px;background:#8a8a8a;"></div>
<div style="left:274px;top:646px;width:1.8px;height:5px;background:#8a8a8a;"></div>
<div style="left:331px;top:646px;width:1.8px;height:5px;background:#8a8a8a;"></div>
<div style="left:388px;top:646px;width:1.5px;height:16px;background:#8a8a8a;"></div>
<div style="left:388px;top:660.5px;width:4px;height:1.5px;background:#8a8a8a;"></div>
<div style="left:445px;top:646px;width:1.8px;height:5px;background:#8a8a8a;"></div>
<div style="left:501px;top:646px;width:1.8px;height:5px;background:#8a8a8a;"></div>
<div style="left:558px;top:646px;width:1.8px;height:5px;background:#8a8a8a;"></div>
<div style="left:615px;top:646px;width:1.5px;height:16px;background:#8a8a8a;"></div>
<div style="left:615px;top:660.5px;width:4px;height:1.5px;background:#8a8a8a;"></div>
<div style="left:672px;top:646px;width:1.8px;height:5px;background:#8a8a8a;"></div>
<div style="left:729px;top:646px;width:1.8px;height:5px;background:#8a8a8a;"></div>
<div style="left:785px;top:646px;width:1.8px;height:5px;background:#8a8a8a;"></div>
<div style="left:842px;top:646px;width:1.5px;height:16px;background:#8a8a8a;"></div>
<div style="left:842px;top:660.5px;width:4px;height:1.5px;background:#8a8a8a;"></div>
<div style="left:899px;top:646px;width:1.8px;height:5px;background:#8a8a8a;"></div>
<div style="left:956px;top:646px;width:1.8px;height:5px;background:#8a8a8a;"></div>
<div style="left:1013px;top:646px;width:1.8px;height:5px;background:#8a8a8a;"></div>
<div style="left:1070px;top:646px;width:1.5px;height:16px;background:#8a8a8a;"></div>
<div style="left:1070px;top:660.5px;width:4px;height:1.5px;background:#8a8a8a;"></div>
<div style="left:1126px;top:646px;width:1.8px;height:5px;background:#8a8a8a;"></div>
<div style="left:1183px;top:646px;width:1.8px;height:5px;background:#8a8a8a;"></div>
<div style="left:1240px;top:646px;width:1.8px;height:5px;background:#8a8a8a;"></div>
<div style="left:1297px;top:646px;width:1.5px;height:16px;background:#8a8a8a;"></div>
<div style="left:1297px;top:660.5px;width:4px;height:1.5px;background:#8a8a8a;"></div>
<div style="left:1354px;top:646px;width:1.8px;height:5px;background:#8a8a8a;"></div>
<div style="left:1411px;top:646px;width:1.8px;height:5px;background:#8a8a8a;"></div>
<div style="left:1467px;top:646px;width:1.8px;height:5px;background:#8a8a8a;"></div>
<div style="left:1524px;top:646px;width:1.5px;height:16px;background:#8a8a8a;"></div>
<div style="left:1524px;top:660.5px;width:4px;height:1.5px;background:#8a8a8a;"></div>
<div style="left:1581px;top:646px;width:1.8px;height:5px;background:#8a8a8a;"></div>
<div style="left:1638px;top:646px;width:1.8px;height:5px;background:#8a8a8a;"></div>
<div style="left:1695px;top:646px;width:1.8px;height:5px;background:#8a8a8a;"></div>
<div style="left:1752px;top:646px;width:1.5px;height:16px;background:#8a8a8a;"></div>
<div style="left:1752px;top:660.5px;width:4px;height:1.5px;background:#8a8a8a;"></div>
<div style="left:1808px;top:646px;width:1.8px;height:5px;background:#8a8a8a;"></div>
<div style="left:1865px;top:646px;width:1.8px;height:5px;background:#8a8a8a;"></div>
<div style="left:1922px;top:646px;width:1.8px;height:5px;background:#8a8a8a;"></div>
<div class="t" style="left:166.5px;top:652.29px;font-size:19.5px;line-height:19.5px;color:#9c9c9c;font-weight:normal;letter-spacing:0.6px;">0:00</div>
<div class="t" style="left:393.8px;top:652.29px;font-size:19.5px;line-height:19.5px;color:#9c9c9c;font-weight:normal;letter-spacing:0.6px;">0:02</div>
<div class="t" style="left:621.1px;top:652.29px;font-size:19.5px;line-height:19.5px;color:#9c9c9c;font-weight:normal;letter-spacing:0.6px;">0:04</div>
<div class="t" style="left:848.4000000000001px;top:652.29px;font-size:19.5px;line-height:19.5px;color:#9c9c9c;font-weight:normal;letter-spacing:0.6px;">0:06</div>
<div class="t" style="left:1075.7px;top:652.29px;font-size:19.5px;line-height:19.5px;color:#9c9c9c;font-weight:normal;letter-spacing:0.6px;">0:08</div>
<div class="t" style="left:1303.0px;top:652.29px;font-size:19.5px;line-height:19.5px;color:#9c9c9c;font-weight:normal;letter-spacing:0.6px;">0:10</div>
<div class="t" style="left:1530.3000000000002px;top:652.29px;font-size:19.5px;line-height:19.5px;color:#9c9c9c;font-weight:normal;letter-spacing:0.6px;">0:12</div>
<div class="t" style="left:1757.6000000000001px;top:652.29px;font-size:19.5px;line-height:19.5px;color:#9c9c9c;font-weight:normal;letter-spacing:0.6px;">0:14</div>
<div class="t" style="left:1984.9px;top:652.29px;font-size:19.5px;line-height:19.5px;color:#9c9c9c;font-weight:normal;letter-spacing:0.6px;">0:16</div>
<div style="left:160px;top:647.5px;width:2px;height:8.5px;background:#9ee6f8;"></div>
<div style="left:0px;top:692px;width:1976px;height:14px;background:#232323;"></div>
<div style="left:0px;top:706px;width:300px;height:248px;background:#2e2e2e;border-top-right-radius:7px"></div>
<div style="left:0px;top:706px;width:300px;height:32px;background:#373737;border-top-right-radius:7px"></div>
<div style="left:0px;top:738px;width:297px;height:216px;background:#2c2c2c;"></div>
<div class="t" style="left:-5.5px;top:713.07px;font-size:20px;line-height:20px;color:#bdbdbd;font-weight:bold;letter-spacing:0.5px;">c</div>
<div style="left:106px;top:710px;width:62px;height:26px;background:#1e1e1e;border-radius:13px"></div>
<div class="t" style="left:112px;top:713.07px;font-size:20px;line-height:20px;color:#c0c0c0;font-weight:normal;letter-spacing:0.4px;">Rand</div>
<div style="left:176px;top:710px;width:50px;height:26px;background:#1e1e1e;"></div>
<div class="t" style="left:180px;top:713.07px;font-size:20px;line-height:20px;color:#c0c0c0;font-weight:normal;letter-spacing:0.9px;">Map</div>
<div style="left:234.2px;top:710.2px;width:25.6px;height:25.6px;border-radius:50%;background:#1e1e1e;"></div>
<div style="left:268.2px;top:710.2px;width:25.6px;height:25.6px;border-radius:50%;background:#1e1e1e;"></div>
<svg style="left:235px;top:711px" width="24" height="24" viewBox="0 0 24 24"><path d="M13 5.7 A6.3 6.3 0 0 0 6.7 12" fill="none" stroke="#c8c8c8" stroke-width="2.2"/><polygon points="3.3,11 10.1,11 6.7,15.2" fill="#c8c8c8"/><path d="M11 18.3 A6.3 6.3 0 0 0 17.3 12" fill="none" stroke="#c8c8c8" stroke-width="2.2"/><polygon points="13.9,13 20.7,13 17.3,8.8" fill="#c8c8c8"/></svg>
<svg style="left:273px;top:715px" width="16" height="16" viewBox="0 0 16 16"><path d="M1 1 H12.2 L15 3.8 V15 H1 Z" fill="#c8c8c8"/><rect x="4.6" y="2.7" width="5.8" height="3.8" fill="#1e1e1e"/></svg>
<div style="left:-20px;top:750px;width:96px;height:56px;background:#a4a4a4;border-radius:2px 2px 0 0"></div>
<div style="left:-20px;top:806px;width:96px;height:101px;background:#2e2e2e;border:1px solid #242424;border-top:none;box-sizing:border-box;border-radius:0 0 3px 3px"></div>
<div style="left:84px;top:750px;width:96px;height:56px;background:#a4a4a4;border-radius:2px 2px 0 0"></div>
<div style="left:84px;top:806px;width:96px;height:101px;background:#2e2e2e;border:1px solid #242424;border-top:none;box-sizing:border-box;border-radius:0 0 3px 3px"></div>
<div style="left:188px;top:750px;width:96px;height:56px;background:#a4a4a4;border-radius:2px 2px 0 0"></div>
<div style="left:188px;top:806px;width:96px;height:101px;background:#2e2e2e;border:1px solid #242424;border-top:none;box-sizing:border-box;border-radius:0 0 3px 3px"></div>
<div class="t" style="left:-170.2px;width:400px;text-align:center;top:756.49px;font-size:19.5px;line-height:19.5px;color:#0c0c0c;font-weight:normal;letter-spacing:0.9px;">Force</div>
<div class="t" style="left:-172px;width:400px;text-align:center;top:871.49px;font-size:19.5px;line-height:19.5px;color:#c2c2c2;font-weight:normal;letter-spacing:0.4px;">36</div>
<div class="t" style="left:-66.19999999999999px;width:400px;text-align:center;top:756.49px;font-size:19.5px;line-height:19.5px;color:#0c0c0c;font-weight:normal;letter-spacing:0.9px;">Chorus</div>
<div class="t" style="left:-68px;width:400px;text-align:center;top:871.49px;font-size:19.5px;line-height:19.5px;color:#c2c2c2;font-weight:normal;letter-spacing:0.4px;">0.0 %</div>
<div class="t" style="left:37.80000000000001px;width:400px;text-align:center;top:756.49px;font-size:19.5px;line-height:19.5px;color:#0c0c0c;font-weight:normal;letter-spacing:0.9px;">Reverb</div>
<div class="t" style="left:36px;width:400px;text-align:center;top:871.49px;font-size:19.5px;line-height:19.5px;color:#c2c2c2;font-weight:normal;letter-spacing:0.4px;">12 %</div>
<svg style="left:0;top:0" width="1976" height="954"><path d="M17.00 867.28 A24 24 0 1 1 41.00 867.28" fill="none" stroke="#181818" stroke-width="4"/><path d="M17.00 867.28 A24 24 0 0 1 7.45 835.94" fill="none" stroke="#00b4cc" stroke-width="4"/><line x1="29" y1="846.5" x2="7.45" y2="835.94" stroke="#181818" stroke-width="4.5" stroke-linecap="butt"/></svg>
<svg style="left:0;top:0" width="1976" height="954"><path d="M121.00 867.28 A24 24 0 1 1 145.00 867.28" fill="none" stroke="#181818" stroke-width="4"/><line x1="133" y1="846.5" x2="121.00" y2="867.28" stroke="#181818" stroke-width="4.5" stroke-linecap="butt"/></svg>
<svg style="left:0;top:0" width="1976" height="954"><path d="M225.00 867.28 A24 24 0 1 1 249.00 867.28" fill="none" stroke="#181818" stroke-width="4"/><path d="M225.00 867.28 A24 24 0 0 1 213.36 842.37" fill="none" stroke="#00b4cc" stroke-width="4"/><line x1="237" y1="846.5" x2="213.36" y2="842.37" stroke="#181818" stroke-width="4.5" stroke-linecap="butt"/></svg>
<div style="left:-20px;top:914px;width:96px;height:40px;background:linear-gradient(90deg,#5e5e5e,#8a8a8a);border-radius:2px 2px 0 0"></div>
<div style="left:84px;top:914px;width:96px;height:40px;background:#a4a4a4;border-radius:2px 2px 0 0"></div>
<div style="left:188px;top:914px;width:96px;height:40px;background:#333333;border:1px solid #262626;box-sizing:border-box;border-radius:3px 3px 0 0"></div>
<div class="t" style="left:-6px;top:920.29px;font-size:19.5px;line-height:19.5px;color:#111111;font-weight:normal;letter-spacing:0.3px;">Release</div>
<div class="t" style="left:3px;top:941.99px;font-size:19.5px;line-height:19.5px;color:#111111;font-weight:normal;letter-spacing:0.6px;">Noise</div>
<div class="t" style="left:90.7px;top:920.29px;font-size:19.5px;line-height:19.5px;color:#0c0c0c;font-weight:normal;letter-spacing:0.9px;">Auto Pan</div>
<div class="t" style="left:37.5px;width:400px;text-align:center;top:920.29px;font-size:19.5px;line-height:19.5px;color:#f2f2f2;font-weight:bold;letter-spacing:0.6px;">Amp</div>
<div style="left:300px;top:706px;width:18px;height:248px;background:#232323;"></div>
<div style="left:303px;top:786px;width:4px;height:168px;background:#1b1b1b;"></div>
<div style="left:309px;top:786px;width:4px;height:168px;background:#1b1b1b;"></div>
<div style="left:303px;top:808px;width:10px;height:1px;background:#333;"></div>
<div style="left:318px;top:706px;width:200px;height:248px;background:#2e2e2e;border-top-left-radius:7px"></div>
<div style="left:318px;top:706px;width:200px;height:34px;background:#363636;border-top-left-radius:7px"></div>
<div style="left:324.2px;top:710.4000000000001px;width:24.6px;height:24.6px;border-radius:50%;background:#111111;"></div>
<div style="left:325.9px;top:712.1px;width:21.2px;height:21.2px;border-radius:50%;background:#ff9c4a;"></div>
<div style="left:356.5px;top:710.0px;width:25.0px;height:25.0px;border-radius:50%;background:#1e1e1e;"></div>
<svg style="left:361.7px;top:718px" width="14.2" height="13.2"><polygon points="0,0 14.2,0 7.1,13.2" fill="#bdbdbd"/></svg>
<div style="left:388.5px;top:710.0px;width:25.0px;height:25.0px;border-radius:50%;background:#1e1e1e;"></div>
<svg style="left:392px;top:713px" width="18" height="18" viewBox="0 0 18 18"><path d="M3 15 L10 8" stroke="#c4c4c4" stroke-width="3.2" stroke-linecap="round"/><circle cx="12" cy="6" r="4" fill="#c4c4c4"/><rect x="11.5" y="0.5" width="4" height="5" fill="#1e1e1e" transform="rotate(45 12 6)"/></svg>
<div class="t" style="left:422px;top:713.07px;font-size:20px;line-height:20px;color:#b8b8b8;font-weight:bold;letter-spacing:0.5px;">ShaperBox</div>
<div class="t" style="left:328px;top:749.49px;font-size:19.5px;line-height:19.5px;color:#b8b8b8;font-weight:normal;letter-spacing:1.05px;">Sidechain</div>
<div style="left:328px;top:772px;width:146px;height:25px;background:#1e1e1e;border:1.5px solid #131313;box-sizing:border-box"></div>
<div class="t" style="left:333px;top:775.49px;font-size:19.5px;line-height:19.5px;color:#c0c0c0;font-weight:normal;letter-spacing:1.0px;">No Input</div>
<svg style="left:456px;top:780px" width="15" height="10"><polygon points="0,0 15,0 7.5,10" fill="#bdbdbd"/></svg>
<div style="left:328px;top:804px;width:146px;height:26px;background:#2a2a2a;border:2px solid #161616;box-sizing:border-box"></div>
<div class="t" style="left:379px;top:843.49px;font-size:19.5px;line-height:19.5px;color:#b8b8b8;font-weight:normal;letter-spacing:0.7px;">Gain</div>
<svg style="left:0;top:0" width="1976" height="954"><path d="M389.00 911.08 A24 24 0 1 1 413.00 911.08" fill="none" stroke="#1c1c1c" stroke-width="4"/><path d="M389.00 911.08 A24 24 0 0 1 389.00 869.52" fill="none" stroke="#686868" stroke-width="4"/><line x1="401" y1="890.3" x2="389.00" y2="869.52" stroke="#1c1c1c" stroke-width="4.5" stroke-linecap="butt"/></svg>
<div class="t" style="left:365px;top:916.49px;font-size:19.5px;line-height:19.5px;color:#c0c0c0;font-weight:normal;letter-spacing:0.3px;">0.00 dB</div>
<div class="t" style="left:384px;top:945.49px;font-size:19.5px;line-height:19.5px;color:#b8b8b8;font-weight:normal;letter-spacing:0.6px;">Mix</div>
<div style="left:488px;top:748px;width:1.5px;height:149px;background:#1e1e1e;"></div>
<div style="left:488px;top:925px;width:1.5px;height:29px;background:#1e1e1e;"></div>
<svg style="left:485px;top:904px" width="8" height="14"><polygon points="0,0 8,7 0,14" fill="#252525"/></svg>
<div style="left:1000px;top:706px;width:554px;height:248px;background:#2e2e2e;border-top-right-radius:7px"></div>
<div style="left:1000px;top:706px;width:554px;height:34px;background:#363636;border-top-right-radius:7px"></div>
<div class="t" style="left:965px;top:713.07px;font-size:20px;line-height:20px;color:#b8b8b8;font-weight:bold;letter-spacing:0.5px;">Compressor</div>
<div style="left:1490.2px;top:709.7px;width:25.6px;height:25.6px;border-radius:50%;background:#1e1e1e;"></div>
<div style="left:1522.2px;top:709.7px;width:25.6px;height:25.6px;border-radius:50%;background:#1e1e1e;"></div>
<svg style="left:1491px;top:710.5px" width="24" height="24" viewBox="0 0 24 24"><path d="M13 5.7 A6.3 6.3 0 0 0 6.7 12" fill="none" stroke="#c8c8c8" stroke-width="2.2"/><polygon points="3.3,11 10.1,11 6.7,15.2" fill="#c8c8c8"/><path d="M11 18.3 A6.3 6.3 0 0 0 17.3 12" fill="none" stroke="#c8c8c8" stroke-width="2.2"/><polygon points="13.9,13 20.7,13 17.3,8.8" fill="#c8c8c8"/></svg>
<svg style="left:1527px;top:714.5px" width="16" height="16" viewBox="0 0 16 16"><path d="M1 1 H12.2 L15 3.8 V15 H1 Z" fill="#c8c8c8"/><rect x="4.6" y="2.7" width="5.8" height="3.8" fill="#1e1e1e"/></svg>
<div style="left:504px;top:748px;width:940px;height:206px;background:#1a1a1a;border-top-right-radius:5px"></div>
<div style="left:784px;top:946px;width:13px;height:8px;background:#2a2a2a;"></div>
<div style="left:803px;top:946px;width:117px;height:8px;background:#2a2a2a;"></div>
<div class="t" style="left:829px;top:949.49px;font-size:19.5px;line-height:19.5px;color:#a8a8a8;font-weight:normal;letter-spacing:0.6px;">Release</div>
<div style="left:959px;top:946px;width:1px;height:8px;background:#2e2e2e;"></div>
<div style="left:980px;top:946px;width:1px;height:8px;background:#2e2e2e;"></div>
<svg style="left:0;top:0" width="1976" height="954"><line x1="1022.6" y1="782.5" x2="1022.6" y2="954" stroke="#3c3c3c" stroke-width="1.2"/><line x1="1054.6" y1="782.5" x2="1054.6" y2="954" stroke="#3c3c3c" stroke-width="1.2"/><line x1="1087" y1="782.5" x2="1087" y2="954" stroke="#3c3c3c" stroke-width="1.2"/><line x1="1119" y1="782.5" x2="1119" y2="954" stroke="#3c3c3c" stroke-width="1.2"/><line x1="1153" y1="782.5" x2="1153" y2="954" stroke="#3c3c3c" stroke-width="1.2"/><line x1="1185" y1="782.5" x2="1185" y2="954" stroke="#3c3c3c" stroke-width="1.2"/><line x1="1217.5" y1="782.5" x2="1217.5" y2="954" stroke="#3c3c3c" stroke-width="1.2"/><line x1="1249.4" y1="782.5" x2="1249.4" y2="954" stroke="#3c3c3c" stroke-width="1.2"/><line x1="1281.3" y1="782.5" x2="1281.3" y2="954" stroke="#3c3c3c" stroke-width="1.2"/><line x1="1022.6" y1="782.5" x2="1281.3" y2="782.5" stroke="#3c3c3c" stroke-width="1.2"/><line x1="1022.6" y1="810.5" x2="1281.3" y2="810.5" stroke="#3c3c3c" stroke-width="1.2"/><line x1="1022.6" y1="837" x2="1281.3" y2="837" stroke="#3c3c3c" stroke-width="1.2"/><line x1="1022.6" y1="865" x2="1281.3" y2="865" stroke="#3c3c3c" stroke-width="1.2"/><line x1="1022.6" y1="892" x2="1281.3" y2="892" stroke="#3c3c3c" stroke-width="1.2"/><line x1="1022.6" y1="918.8" x2="1281.3" y2="918.8" stroke="#3c3c3c" stroke-width="1.2"/><line x1="1022.6" y1="946.7" x2="1281.3" y2="946.7" stroke="#3c3c3c" stroke-width="1.2"/><line x1="1129.5" y1="782.5" x2="1129.5" y2="954" stroke="#555" stroke-width="1"/><line x1="1133.5" y1="782.5" x2="1133.5" y2="954" stroke="#555" stroke-width="1"/><line x1="1137.5" y1="782.5" x2="1137.5" y2="954" stroke="#555" stroke-width="1"/><polyline points="1036,954 1133,873 1279.5,813" fill="none" stroke="#00b4cc" stroke-width="3"/><circle cx="1133" cy="873" r="13.3" fill="#ff9f50"/></svg>
<div class="t" style="left:1305px;top:756.92px;font-size:19px;line-height:19px;color:#8c8c8c;font-weight:normal;letter-spacing:0.5px;">GR</div>
<div class="t" style="left:1379px;top:756.92px;font-size:19px;line-height:19px;color:#8c8c8c;font-weight:normal;letter-spacing:0.5px;">Out</div>
<div style="left:1306.5px;top:782.5px;width:22px;height:172px;background:#161616;border:1.5px solid #3c3c3c;box-sizing:border-box;border-bottom:none"></div>
<div style="left:1306.5px;top:814.5px;width:22px;height:1.5px;background:#3c3c3c;"></div>
<div style="left:1384.3px;top:782.5px;width:22px;height:172px;background:#161616;border:1.5px solid #3c3c3c;box-sizing:border-box;border-bottom:none"></div>
<div style="left:1386px;top:815.5px;width:8px;height:1.5px;background:#3c3c3c;"></div>
<div style="left:1397px;top:815.5px;width:8px;height:1.5px;background:#3c3c3c;"></div>
<svg style="left:1408px;top:880px" width="21" height="22"><polygon points="0,11 21,0 21,22" fill="#7a7a7a"/></svg>
<div style="left:1456px;top:750.5px;width:88px;height:26px;background:#ff9f50;border:1.5px solid #141414;box-sizing:border-box"></div>
<div class="t" style="left:1300.0px;width:400px;text-align:center;top:754.99px;font-size:19.5px;line-height:19.5px;color:#101010;font-weight:normal;letter-spacing:0.6px;">Makeup</div>
<div style="left:1456px;top:832.5px;width:86px;height:25.5px;background:#ff9f50;border:1.5px solid #141414;box-sizing:border-box"></div>
<div class="t" style="left:1299.0px;width:400px;text-align:center;top:836.49px;font-size:19.5px;line-height:19.5px;color:#101010;font-weight:normal;letter-spacing:0.6px;">Peak</div>
<div style="left:1456px;top:864.5px;width:86px;height:25.5px;background:#1e1e1e;border:1.5px solid #141414;box-sizing:border-box"></div>
<div class="t" style="left:1299.0px;width:400px;text-align:center;top:868.49px;font-size:19.5px;line-height:19.5px;color:#bdbdbd;font-weight:normal;letter-spacing:0.6px;">RMS</div>
<div style="left:1456px;top:896.5px;width:86px;height:25.5px;background:#1e1e1e;border:1.5px solid #141414;box-sizing:border-box"></div>
<div class="t" style="left:1299.0px;width:400px;text-align:center;top:900.49px;font-size:19.5px;line-height:19.5px;color:#bdbdbd;font-weight:normal;letter-spacing:0.6px;">Expand</div>
<div style="left:1554px;top:706px;width:19px;height:248px;background:#232323;"></div>
<div style="left:1558px;top:786px;width:4px;height:168px;background:#1b1b1b;"></div>
<div style="left:1564px;top:786px;width:4px;height:168px;background:#1b1b1b;"></div>
<div style="left:1558px;top:808px;width:10px;height:1px;background:#333;"></div>
<div style="left:1573px;top:706px;width:403px;height:248px;background:#2e2e2e;border-top-left-radius:7px"></div>
<div style="left:499px;top:61px;width:506px;height:885px;background:#0e0e0e;box-shadow:0 0 14px 2px rgba(0,0,0,0.13)"></div>
<div style="left:500px;top:62px;width:504px;height:883px;background:#b2b2b2;"></div>
<div style="left:502.3px;top:64px;width:499.7px;height:879px;background:#202020;"></div>
<div class="t" style="left:532.5px;top:72.05px;font-size:19.9px;line-height:19.9px;color:#bdbdbd;font-weight:normal;letter-spacing:0.7px;">Cut</div>
<svg style="left:951.5px;top:66px;margin-top:7px" width="18" height="16" viewBox="0 0 18 16"><path d="M6.3 6.3 V4.1 A2.2 2.2 0 1 0 4.1 6.3 H13.8 A2.2 2.2 0 1 0 11.6 4.1 V12 A2.2 2.2 0 1 0 13.8 9.8 H4.1 A2.2 2.2 0 1 0 6.3 12 Z" fill="none" stroke="#bdbdbd" stroke-width="1.8"/></svg><div class="t" style="right:989px;top:66px;margin-top:5.9px;font-size:19.9px;line-height:19.9px;color:#bdbdbd;letter-spacing:0">X</div>
<div class="t" style="left:532.5px;top:102.05px;font-size:19.9px;line-height:19.9px;color:#bdbdbd;font-weight:normal;letter-spacing:0.7px;">Copy</div>
<svg style="left:951.5px;top:96px;margin-top:7px" width="18" height="16" viewBox="0 0 18 16"><path d="M6.3 6.3 V4.1 A2.2 2.2 0 1 0 4.1 6.3 H13.8 A2.2 2.2 0 1 0 11.6 4.1 V12 A2.2 2.2 0 1 0 13.8 9.8 H4.1 A2.2 2.2 0 1 0 6.3 12 Z" fill="none" stroke="#bdbdbd" stroke-width="1.8"/></svg><div class="t" style="right:989px;top:96px;margin-top:5.9px;font-size:19.9px;line-height:19.9px;color:#bdbdbd;letter-spacing:0">C</div>
<div class="t" style="left:532.5px;top:132.05px;font-size:19.9px;line-height:19.9px;color:#bdbdbd;font-weight:normal;letter-spacing:1.1px;">Duplicate</div>
<svg style="left:951.5px;top:126px;margin-top:7px" width="18" height="16" viewBox="0 0 18 16"><path d="M6.3 6.3 V4.1 A2.2 2.2 0 1 0 4.1 6.3 H13.8 A2.2 2.2 0 1 0 11.6 4.1 V12 A2.2 2.2 0 1 0 13.8 9.8 H4.1 A2.2 2.2 0 1 0 6.3 12 Z" fill="none" stroke="#bdbdbd" stroke-width="1.8"/></svg><div class="t" style="right:989px;top:126px;margin-top:5.9px;font-size:19.9px;line-height:19.9px;color:#bdbdbd;letter-spacing:0">D</div>
<div class="t" style="left:532.5px;top:162.05px;font-size:19.9px;line-height:19.9px;color:#bdbdbd;font-weight:normal;letter-spacing:1.1px;">Delete</div>
<div class="t" style="right:989px;top:156px;margin-top:5.9px;font-size:19.9px;line-height:19.9px;color:#bdbdbd;letter-spacing:0">Del</div>
<div style="left:502.3px;top:196px;width:499.7px;height:2.2px;background:#b2b2b2;"></div>
<div class="t" style="left:532.5px;top:212.05px;font-size:19.9px;line-height:19.9px;color:#bdbdbd;font-weight:normal;letter-spacing:0.8899999999999999px;">Zoom to Time Selection</div>
<div class="t" style="right:989px;top:206px;margin-top:5.9px;font-size:19.9px;line-height:19.9px;color:#bdbdbd;letter-spacing:0">Z</div>
<div class="t" style="left:532.5px;top:242.05px;font-size:19.9px;line-height:19.9px;color:#bdbdbd;font-weight:normal;letter-spacing:0.7899999999999999px;">Zoom Back from Time Selection</div>
<div class="t" style="right:989px;top:236px;margin-top:5.9px;font-size:19.9px;line-height:19.9px;color:#bdbdbd;letter-spacing:0">X</div>
<div style="left:502.3px;top:276px;width:499.7px;height:2.2px;background:#b2b2b2;"></div>
<div class="t" style="left:532.5px;top:292.05px;font-size:19.9px;line-height:19.9px;color:#bdbdbd;font-weight:normal;letter-spacing:0.33999999999999997px;">Rename</div>
<svg style="left:951.5px;top:286px;margin-top:7px" width="18" height="16" viewBox="0 0 18 16"><path d="M6.3 6.3 V4.1 A2.2 2.2 0 1 0 4.1 6.3 H13.8 A2.2 2.2 0 1 0 11.6 4.1 V12 A2.2 2.2 0 1 0 13.8 9.8 H4.1 A2.2 2.2 0 1 0 6.3 12 Z" fill="none" stroke="#bdbdbd" stroke-width="1.8"/></svg><div class="t" style="right:989px;top:286px;margin-top:5.9px;font-size:19.9px;line-height:19.9px;color:#bdbdbd;letter-spacing:0">R</div>
<div class="t" style="left:532.5px;top:322.05px;font-size:19.9px;line-height:19.9px;color:#bdbdbd;font-weight:normal;letter-spacing:0.8999999999999999px;">Edit Info Text</div>
<div class="t" style="left:532.5px;top:352.05px;font-size:19.9px;line-height:19.9px;color:#bdbdbd;font-weight:normal;letter-spacing:1.0499999999999998px;">Extract Groove(s)</div>
<div class="t" style="left:532.5px;top:382.05px;font-size:19.9px;line-height:19.9px;color:#bdbdbd;font-weight:normal;letter-spacing:0.9099999999999999px;">Deactivate Clip</div>
<div class="t" style="right:989px;top:376px;margin-top:5.9px;font-size:19.9px;line-height:19.9px;color:#bdbdbd;letter-spacing:0">0</div>
<div class="t" style="left:532.5px;top:412.05px;font-size:19.9px;line-height:19.9px;color:#bdbdbd;font-weight:normal;letter-spacing:1.04px;">Consolidate</div>
<svg style="left:951.5px;top:406px;margin-top:7px" width="18" height="16" viewBox="0 0 18 16"><path d="M6.3 6.3 V4.1 A2.2 2.2 0 1 0 4.1 6.3 H13.8 A2.2 2.2 0 1 0 11.6 4.1 V12 A2.2 2.2 0 1 0 13.8 9.8 H4.1 A2.2 2.2 0 1 0 6.3 12 Z" fill="none" stroke="#bdbdbd" stroke-width="1.8"/></svg><div class="t" style="right:989px;top:406px;margin-top:5.9px;font-size:19.9px;line-height:19.9px;color:#bdbdbd;letter-spacing:0">J</div>
<div class="t" style="left:532.5px;top:442.05px;font-size:19.9px;line-height:19.9px;color:#bdbdbd;font-weight:normal;letter-spacing:0.7px;">Consolidate Time to New Scene</div>
<div class="t" style="left:532.5px;top:472.05px;font-size:19.9px;line-height:19.9px;color:#bdbdbd;font-weight:normal;letter-spacing:0.77px;">Export MIDI Clip...</div>
<svg style="left:930px;top:466px;margin-top:7px" width="18" height="15" viewBox="0 0 18 15"><path d="M9 1.2 L16.5 8.3 H12.3 V13.8 H5.7 V8.3 H1.5 Z" fill="none" stroke="#bdbdbd" stroke-width="1.7" stroke-linejoin="miter"/></svg><svg style="left:951.5px;top:466px;margin-top:7px" width="18" height="16" viewBox="0 0 18 16"><path d="M6.3 6.3 V4.1 A2.2 2.2 0 1 0 4.1 6.3 H13.8 A2.2 2.2 0 1 0 11.6 4.1 V12 A2.2 2.2 0 1 0 13.8 9.8 H4.1 A2.2 2.2 0 1 0 6.3 12 Z" fill="none" stroke="#bdbdbd" stroke-width="1.8"/></svg><div class="t" style="right:989px;top:466px;margin-top:5.9px;font-size:19.9px;line-height:19.9px;color:#bdbdbd;letter-spacing:0">E</div>
<div style="left:502.3px;top:506px;width:499.7px;height:2.2px;background:#b2b2b2;"></div>
<div class="t" style="left:532.5px;top:522.05px;font-size:19.9px;line-height:19.9px;color:#bdbdbd;font-weight:normal;letter-spacing:0.87px;">Deactivate Loop</div>
<svg style="left:951.5px;top:516px;margin-top:7px" width="18" height="16" viewBox="0 0 18 16"><path d="M6.3 6.3 V4.1 A2.2 2.2 0 1 0 4.1 6.3 H13.8 A2.2 2.2 0 1 0 11.6 4.1 V12 A2.2 2.2 0 1 0 13.8 9.8 H4.1 A2.2 2.2 0 1 0 6.3 12 Z" fill="none" stroke="#bdbdbd" stroke-width="1.8"/></svg><div class="t" style="right:989px;top:516px;margin-top:5.9px;font-size:19.9px;line-height:19.9px;color:#bdbdbd;letter-spacing:0">L</div>
<div style="left:502.3px;top:556px;width:499.7px;height:2.2px;background:#b2b2b2;"></div>
<div style="left:502.3px;top:568px;width:499.7px;height:26px;background:#a6d8e8;"></div>
<div class="t" style="left:532.5px;top:572.05px;font-size:19.9px;line-height:19.9px;color:#0a0a0a;font-weight:normal;letter-spacing:0.6499999999999999px;">Freeze Track</div>
<svg style="left:908px;top:566px;margin-top:7.5px" width="19" height="15" viewBox="0 0 19 15"><path d="M0.5 1.5 H6 L13.5 13.5 H18.5 M11.5 1.5 H18.5" fill="none" stroke="#0a0a0a" stroke-width="2"/></svg><svg style="left:930px;top:566px;margin-top:7px" width="18" height="15" viewBox="0 0 18 15"><path d="M9 1.2 L16.5 8.3 H12.3 V13.8 H5.7 V8.3 H1.5 Z" fill="none" stroke="#0a0a0a" stroke-width="1.7" stroke-linejoin="miter"/></svg><svg style="left:951.5px;top:566px;margin-top:7px" width="18" height="16" viewBox="0 0 18 16"><path d="M6.3 6.3 V4.1 A2.2 2.2 0 1 0 4.1 6.3 H13.8 A2.2 2.2 0 1 0 11.6 4.1 V12 A2.2 2.2 0 1 0 13.8 9.8 H4.1 A2.2 2.2 0 1 0 6.3 12 Z" fill="none" stroke="#0a0a0a" stroke-width="1.8"/></svg><div class="t" style="right:989px;top:566px;margin-top:5.9px;font-size:19.9px;line-height:19.9px;color:#0a0a0a;letter-spacing:0">F</div>
<div class="t" style="left:532.5px;top:602.05px;font-size:19.9px;line-height:19.9px;color:#bdbdbd;font-weight:normal;letter-spacing:0.8099999999999999px;">Freeze and Flatten Track</div>
<div style="left:502.3px;top:636px;width:499.7px;height:2.2px;background:#b2b2b2;"></div>
<div class="t" style="left:532.5px;top:652.05px;font-size:19.9px;line-height:19.9px;color:#bdbdbd;font-weight:normal;letter-spacing:0.7px;">Crop Clip</div>
<div class="t" style="left:532.5px;top:682.05px;font-size:19.9px;line-height:19.9px;color:#bdbdbd;font-weight:normal;letter-spacing:0.5499999999999999px;">Reverse Clip(s)</div>
<div class="t" style="right:989px;top:676px;margin-top:5.9px;font-size:19.9px;line-height:19.9px;color:#bdbdbd;letter-spacing:0">R</div>
<div style="left:502.3px;top:716px;width:499.7px;height:2.2px;background:#b2b2b2;"></div>
<div style="left:520px;top:730px;width:22px;height:22px;background:#FF8AA0;"></div>
<div style="left:554px;top:730px;width:22px;height:22px;background:#FF9D35;"></div>
<div style="left:588px;top:730px;width:22px;height:22px;background:#C88A38;"></div>
<div style="left:622px;top:730px;width:22px;height:22px;background:#FCEB6A;"></div>
<div style="left:656px;top:730px;width:22px;height:22px;background:#BAF53E;"></div>
<div style="left:690px;top:730px;width:22px;height:22px;background:#00F040;"></div>
<div style="left:724px;top:730px;width:22px;height:22px;background:#00F5A0;"></div>
<div style="left:758px;top:730px;width:22px;height:22px;background:#22F0F0;"></div>
<div style="left:792px;top:730px;width:22px;height:22px;background:#7DC0FF;"></div>
<div style="left:826px;top:730px;width:22px;height:22px;background:#3F78DA;"></div>
<div style="left:860px;top:730px;width:22px;height:22px;background:#80A0FF;"></div>
<div style="left:894px;top:730px;width:22px;height:22px;background:#D060D8;"></div>
<div style="left:928px;top:730px;width:22px;height:22px;background:#E0448F;"></div>
<div style="left:962px;top:730px;width:22px;height:22px;background:#FFFFFF;"></div>
<div style="left:520px;top:764px;width:22px;height:22px;background:#FF2035;"></div>
<div style="left:554px;top:764px;width:22px;height:22px;background:#FF5B1E;"></div>
<div style="left:588px;top:764px;width:22px;height:22px;background:#906040;"></div>
<div style="left:622px;top:764px;width:22px;height:22px;background:#FFEB60;"></div>
<div style="left:656px;top:764px;width:22px;height:22px;background:#77FF70;"></div>
<div style="left:690px;top:764px;width:22px;height:22px;background:#30B52E;"></div>
<div style="left:724px;top:764px;width:22px;height:22px;background:#00A8B8;"></div>
<div style="left:758px;top:764px;width:22px;height:22px;background:#20F0F0;"></div>
<div style="left:792px;top:764px;width:22px;height:22px;background:#120c0a;"></div>
<div style="left:794px;top:766px;width:18px;height:18px;background:#0099E0;"></div>
<div style="left:826px;top:764px;width:22px;height:22px;background:#0077B5;"></div>
<div style="left:860px;top:764px;width:22px;height:22px;background:#7A60D8;"></div>
<div style="left:894px;top:764px;width:22px;height:22px;background:#B070C0;"></div>
<div style="left:928px;top:764px;width:22px;height:22px;background:#FF2AC8;"></div>
<div style="left:962px;top:764px;width:22px;height:22px;background:#CDCDCD;"></div>
<div style="left:520px;top:798px;width:22px;height:22px;background:#E0584F;"></div>
<div style="left:554px;top:798px;width:22px;height:22px;background:#FF9060;"></div>
<div style="left:588px;top:798px;width:22px;height:22px;background:#D0A060;"></div>
<div style="left:622px;top:798px;width:22px;height:22px;background:#EEFAAA;"></div>
<div style="left:656px;top:798px;width:22px;height:22px;background:#D0E098;"></div>
<div style="left:690px;top:798px;width:22px;height:22px;background:#B8CC78;"></div>
<div style="left:724px;top:798px;width:22px;height:22px;background:#90BE84;"></div>
<div style="left:758px;top:798px;width:22px;height:22px;background:#DDFADB;"></div>
<div style="left:792px;top:798px;width:22px;height:22px;background:#CCF5EE;"></div>
<div style="left:826px;top:798px;width:22px;height:22px;background:#B0BCE0;"></div>
<div style="left:860px;top:798px;width:22px;height:22px;background:#BAB2E0;"></div>
<div style="left:894px;top:798px;width:22px;height:22px;background:#A090E0;"></div>
<div style="left:928px;top:798px;width:22px;height:22px;background:#E8DCE0;"></div>
<div style="left:962px;top:798px;width:22px;height:22px;background:#A0A0A0;"></div>
<div style="left:520px;top:832px;width:22px;height:22px;background:#C08A85;"></div>
<div style="left:554px;top:832px;width:22px;height:22px;background:#B07848;"></div>
<div style="left:588px;top:832px;width:22px;height:22px;background:#947A60;"></div>
<div style="left:622px;top:832px;width:22px;height:22px;background:#C0B468;"></div>
<div style="left:656px;top:832px;width:22px;height:22px;background:#A0B030;"></div>
<div style="left:690px;top:832px;width:22px;height:22px;background:#70A848;"></div>
<div style="left:724px;top:832px;width:22px;height:22px;background:#78BEB0;"></div>
<div style="left:758px;top:832px;width:22px;height:22px;background:#98ACBF;"></div>
<div style="left:792px;top:832px;width:22px;height:22px;background:#80A0C8;"></div>
<div style="left:826px;top:832px;width:22px;height:22px;background:#7888D8;"></div>
<div style="left:860px;top:832px;width:22px;height:22px;background:#A890B8;"></div>
<div style="left:894px;top:832px;width:22px;height:22px;background:#C8A0C0;"></div>
<div style="left:928px;top:832px;width:22px;height:22px;background:#C06898;"></div>
<div style="left:962px;top:832px;width:22px;height:22px;background:#787878;"></div>
<div style="left:520px;top:866px;width:22px;height:22px;background:#A83232;"></div>
<div style="left:554px;top:866px;width:22px;height:22px;background:#A04030;"></div>
<div style="left:588px;top:866px;width:22px;height:22px;background:#6A4A40;"></div>
<div style="left:622px;top:866px;width:22px;height:22px;background:#D8B050;"></div>
<div style="left:656px;top:866px;width:22px;height:22px;background:#7E8A30;"></div>
<div style="left:690px;top:866px;width:22px;height:22px;background:#4A9838;"></div>
<div style="left:724px;top:866px;width:22px;height:22px;background:#009890;"></div>
<div style="left:758px;top:866px;width:22px;height:22px;background:#0A5A80;"></div>
<div style="left:792px;top:866px;width:22px;height:22px;background:#002A8C;"></div>
<div style="left:826px;top:866px;width:22px;height:22px;background:#2050A0;"></div>
<div style="left:860px;top:866px;width:22px;height:22px;background:#5848A0;"></div>
<div style="left:894px;top:866px;width:22px;height:22px;background:#A040A8;"></div>
<div style="left:928px;top:866px;width:22px;height:22px;background:#CC2060;"></div>
<div style="left:962px;top:866px;width:22px;height:22px;background:#383838;"></div>
<div style="left:502.3px;top:902px;width:499.7px;height:2.2px;background:#b2b2b2;"></div>
<div class="t" style="left:532.5px;top:918.05px;font-size:19.9px;line-height:19.9px;color:#bdbdbd;font-weight:normal;letter-spacing:0.6px;">Copy Max for Live Path</div>
</body></html>
